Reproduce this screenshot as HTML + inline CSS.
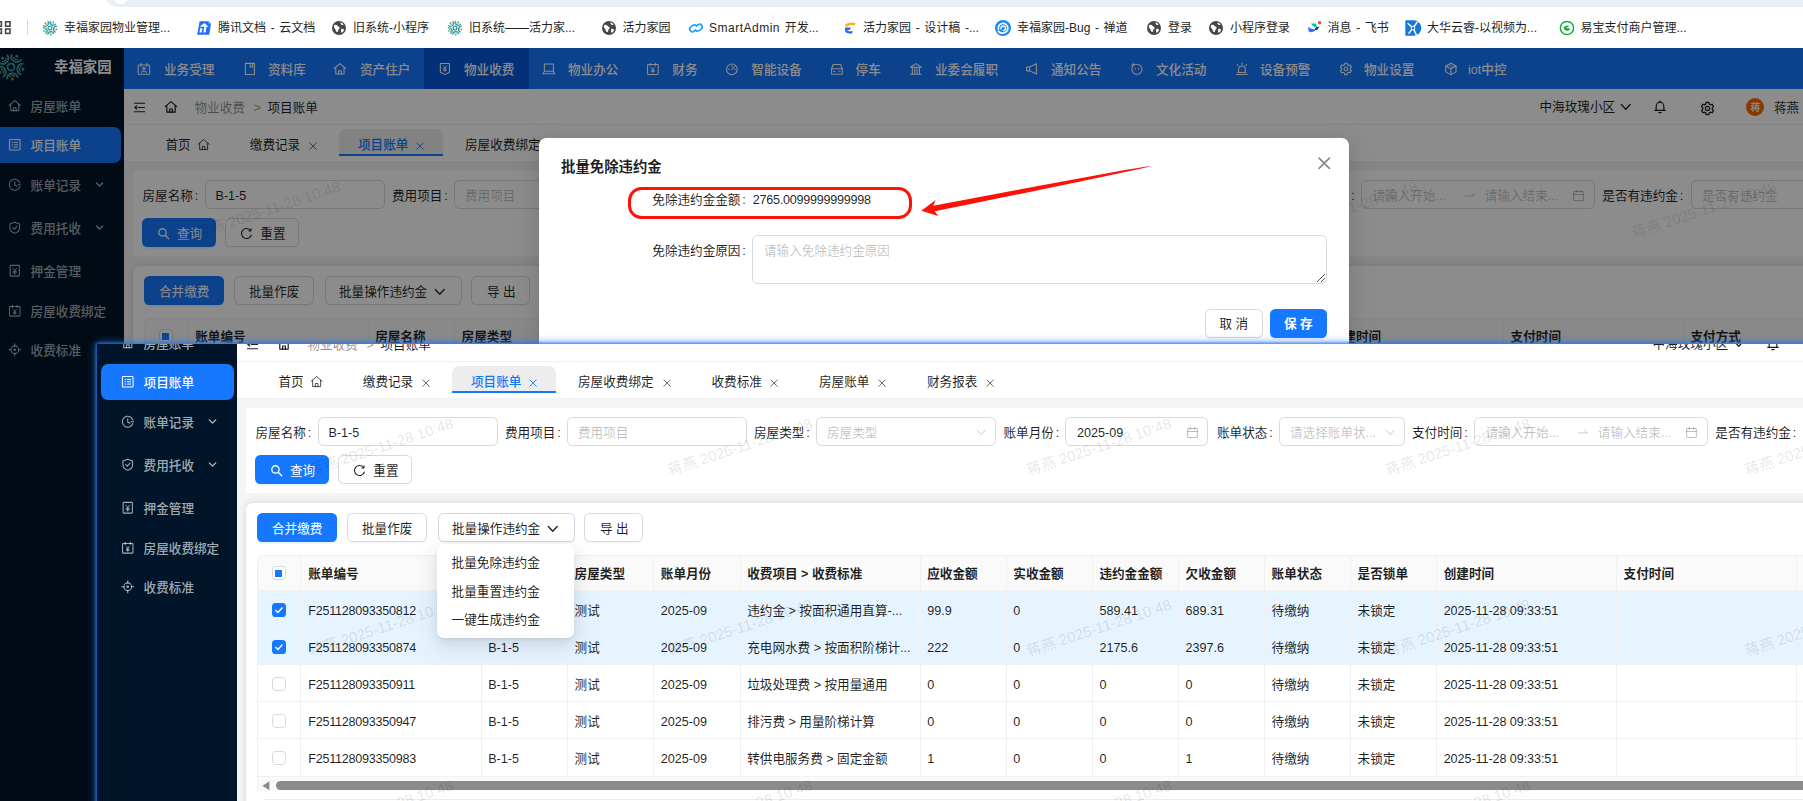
<!DOCTYPE html>
<html lang="zh-CN"><head><meta charset="utf-8"><title>项目账单</title>
<style>
*{box-sizing:border-box;margin:0;padding:0}
html,body{width:1803px;height:801px;overflow:hidden;background:#fff}
body{position:relative;font-family:"Liberation Sans","Noto Sans CJK SC",sans-serif;font-size:12.6px;color:rgba(0,0,0,.88)}
div,span.t,svg.i{position:absolute}
span.t{white-space:nowrap;line-height:20px;height:20px;margin-top:-10px;display:block}
svg.i{overflow:visible;display:block}
#s1{left:0;top:48px;width:1803px;height:753px;overflow:hidden}
#s2{left:97px;top:344px;width:1706px;height:457px;overflow:hidden;background:#fff}
#s2b{left:97px;top:344px;width:1720px;height:470px;box-shadow:0 0 9px 1.5px rgba(42,122,238,.75),0 0 3px 1px rgba(42,122,238,.9);pointer-events:none}
.pg{width:1933px;height:1100px}
#mask{left:0;top:0;width:1803px;height:753px;background:rgba(0,0,0,.45)}
.w{color:#fff}
.g{color:rgba(0,0,0,.45)}
.ph{color:rgba(0,0,0,.25)}
.b{font-weight:700}
.inp{border:1px solid #d9d9d9;border-radius:5.4px;background:#fff}
.btn{border:1px solid #d9d9d9;border-radius:5.4px;background:#fff;box-shadow:0 1.8px 0 rgba(0,0,0,.02)}
.btnp{border-radius:5.4px;background:#1677ff;box-shadow:0 1.8px 0 rgba(5,145,255,.1)}
.wm{color:rgba(0,0,0,.115);font-size:15px;text-align:center;transform:rotate(-18.4deg);white-space:nowrap;line-height:18px;pointer-events:none}
.n{letter-spacing:-0.25px}
.c{font-style:normal;margin-left:1.8px}
.n2{letter-spacing:-0.08px}

</style></head>
<body>
<div style="left:0.00px;top:0.00px;width:1803.00px;height:48.00px;background:#fff"></div>
<div style="left:105.00px;top:-20.00px;width:1800.00px;height:26.50px;background:#e9eef8;border-radius:13px"></div>
<div style="left:113.50px;top:-10.00px;width:14.00px;height:14.00px;background:#fff;border-radius:50%"></div>
<svg class="i" style="left:-1px;top:20.5px" width="12" height="13" viewBox="0 0 12 13" fill="none" stroke="#474747" stroke-width="1.6"><rect x="-2" y="0.8" width="4.4" height="4.4"/><rect x="6.6" y="0.8" width="4.4" height="4.4"/><rect x="-2" y="8" width="4.4" height="4.4"/><rect x="6.6" y="8" width="4.4" height="4.4"/></svg>
<div style="left:26.50px;top:19.00px;width:1.50px;height:16.00px;background:#c9d8f5;border-radius:1px"></div>
<svg class="i" style="left:42.00px;top:19.50px" width="16" height="16" viewBox="-14.5 -14.5 29 29"><g transform="rotate(28.6)"><circle cx="0" cy="-12.2" r="1.5" fill="#2f9fa6"/><path d="M-5.38 -10.86 A5.5 5.5 0 0 0 5.38 -10.86" stroke="#2f9fa6" stroke-width="2.3" fill="none" stroke-linecap="round"/><path d="M-2.53 -9.88 A3.3 3.3 0 0 0 2.53 -9.88" stroke="#d9982a" stroke-width="1.15" fill="none" stroke-linecap="round"/></g><g transform="rotate(100.6)"><circle cx="0" cy="-12.2" r="1.5" fill="#2f9fa6"/><path d="M-5.38 -10.86 A5.5 5.5 0 0 0 5.38 -10.86" stroke="#2f9fa6" stroke-width="2.3" fill="none" stroke-linecap="round"/><path d="M-2.53 -9.88 A3.3 3.3 0 0 0 2.53 -9.88" stroke="#d9982a" stroke-width="1.15" fill="none" stroke-linecap="round"/></g><g transform="rotate(172.6)"><circle cx="0" cy="-12.2" r="1.5" fill="#2f9fa6"/><path d="M-5.38 -10.86 A5.5 5.5 0 0 0 5.38 -10.86" stroke="#2f9fa6" stroke-width="2.3" fill="none" stroke-linecap="round"/><path d="M-2.53 -9.88 A3.3 3.3 0 0 0 2.53 -9.88" stroke="#d9982a" stroke-width="1.15" fill="none" stroke-linecap="round"/></g><g transform="rotate(244.6)"><circle cx="0" cy="-12.2" r="1.5" fill="#2f9fa6"/><path d="M-5.38 -10.86 A5.5 5.5 0 0 0 5.38 -10.86" stroke="#2f9fa6" stroke-width="2.3" fill="none" stroke-linecap="round"/><path d="M-2.53 -9.88 A3.3 3.3 0 0 0 2.53 -9.88" stroke="#d9982a" stroke-width="1.15" fill="none" stroke-linecap="round"/></g><g transform="rotate(316.6)"><circle cx="0" cy="-12.2" r="1.5" fill="#2f9fa6"/><path d="M-5.38 -10.86 A5.5 5.5 0 0 0 5.38 -10.86" stroke="#2f9fa6" stroke-width="2.3" fill="none" stroke-linecap="round"/><path d="M-2.53 -9.88 A3.3 3.3 0 0 0 2.53 -9.88" stroke="#d9982a" stroke-width="1.15" fill="none" stroke-linecap="round"/></g><circle r="3.5" fill="none" stroke="#2f9fa6" stroke-width="2.3"/></svg>
<span class="t" style="left:64.00px;top:27.60px;font-size:12px;color:#1f1f1f;word-spacing:1.3px">幸福家园物业管理...</span>
<svg class="i" style="left:196.00px;top:19.50px" width="16" height="16" viewBox="0 0 16 16"><path d="M3.6 1.2 H12.4 L15 3.8 L13.2 14.8 H1.2 Z" fill="#1e6fff"/><path d="M12.4 1.2 L15 3.8 H12.4 Z" fill="#19d3f3"/><path d="M3.6 6.8 L8.4 3 L12.6 6.8 H10.4 L9.6 12.6 H7.4 L8.2 6.8 Z" fill="#fff"/><path d="M4.2 8.2 H6.4 L5.6 12.6 H3.4 Z" fill="#fff"/></svg>
<span class="t" style="left:218.00px;top:27.60px;font-size:12px;color:#1f1f1f;word-spacing:1.3px">腾讯文档 - 云文档</span>
<svg class="i" style="left:331.00px;top:19.50px" width="16" height="16" viewBox="0 0 16 16"><circle cx="8" cy="8" r="7" fill="#474747"/><path d="M3.2 5.2 C4.6 4.4 5.8 4.8 6.4 5.8 C7 6.8 8.4 6.6 8.6 7.8 C8.8 9 7.4 9.2 7.2 10.4 C7 11.6 6 12.6 5.2 11.6 C4.4 10.6 4.8 9.4 3.8 8.6 C2.8 7.8 2.4 6.2 3.2 5.2 Z M9.6 2.6 C10.8 3 12 3.6 12.6 4.8 C11.8 5.4 10.8 5 10.2 4.4 C9.6 3.8 9.2 3.2 9.6 2.6 Z M10.4 9 C11.4 8.6 12.6 9 13 10 C12.6 11.4 11.6 12.4 10.6 12.8 C10 11.8 9.8 10 10.4 9 Z" fill="#fff"/></svg>
<span class="t" style="left:353.00px;top:27.60px;font-size:12px;color:#1f1f1f;word-spacing:1.3px">旧系统-小程序</span>
<svg class="i" style="left:447.00px;top:19.50px" width="16" height="16" viewBox="-14.5 -14.5 29 29"><g transform="rotate(28.6)"><circle cx="0" cy="-12.2" r="1.5" fill="#2f9fa6"/><path d="M-5.38 -10.86 A5.5 5.5 0 0 0 5.38 -10.86" stroke="#2f9fa6" stroke-width="2.3" fill="none" stroke-linecap="round"/><path d="M-2.53 -9.88 A3.3 3.3 0 0 0 2.53 -9.88" stroke="#d9982a" stroke-width="1.15" fill="none" stroke-linecap="round"/></g><g transform="rotate(100.6)"><circle cx="0" cy="-12.2" r="1.5" fill="#2f9fa6"/><path d="M-5.38 -10.86 A5.5 5.5 0 0 0 5.38 -10.86" stroke="#2f9fa6" stroke-width="2.3" fill="none" stroke-linecap="round"/><path d="M-2.53 -9.88 A3.3 3.3 0 0 0 2.53 -9.88" stroke="#d9982a" stroke-width="1.15" fill="none" stroke-linecap="round"/></g><g transform="rotate(172.6)"><circle cx="0" cy="-12.2" r="1.5" fill="#2f9fa6"/><path d="M-5.38 -10.86 A5.5 5.5 0 0 0 5.38 -10.86" stroke="#2f9fa6" stroke-width="2.3" fill="none" stroke-linecap="round"/><path d="M-2.53 -9.88 A3.3 3.3 0 0 0 2.53 -9.88" stroke="#d9982a" stroke-width="1.15" fill="none" stroke-linecap="round"/></g><g transform="rotate(244.6)"><circle cx="0" cy="-12.2" r="1.5" fill="#2f9fa6"/><path d="M-5.38 -10.86 A5.5 5.5 0 0 0 5.38 -10.86" stroke="#2f9fa6" stroke-width="2.3" fill="none" stroke-linecap="round"/><path d="M-2.53 -9.88 A3.3 3.3 0 0 0 2.53 -9.88" stroke="#d9982a" stroke-width="1.15" fill="none" stroke-linecap="round"/></g><g transform="rotate(316.6)"><circle cx="0" cy="-12.2" r="1.5" fill="#2f9fa6"/><path d="M-5.38 -10.86 A5.5 5.5 0 0 0 5.38 -10.86" stroke="#2f9fa6" stroke-width="2.3" fill="none" stroke-linecap="round"/><path d="M-2.53 -9.88 A3.3 3.3 0 0 0 2.53 -9.88" stroke="#d9982a" stroke-width="1.15" fill="none" stroke-linecap="round"/></g><circle r="3.5" fill="none" stroke="#2f9fa6" stroke-width="2.3"/></svg>
<span class="t" style="left:469.00px;top:27.60px;font-size:12px;color:#1f1f1f;word-spacing:1.3px">旧系统——活力家...</span>
<svg class="i" style="left:601.00px;top:19.50px" width="16" height="16" viewBox="0 0 16 16"><circle cx="8" cy="8" r="7" fill="#474747"/><path d="M3.2 5.2 C4.6 4.4 5.8 4.8 6.4 5.8 C7 6.8 8.4 6.6 8.6 7.8 C8.8 9 7.4 9.2 7.2 10.4 C7 11.6 6 12.6 5.2 11.6 C4.4 10.6 4.8 9.4 3.8 8.6 C2.8 7.8 2.4 6.2 3.2 5.2 Z M9.6 2.6 C10.8 3 12 3.6 12.6 4.8 C11.8 5.4 10.8 5 10.2 4.4 C9.6 3.8 9.2 3.2 9.6 2.6 Z M10.4 9 C11.4 8.6 12.6 9 13 10 C12.6 11.4 11.6 12.4 10.6 12.8 C10 11.8 9.8 10 10.4 9 Z" fill="#fff"/></svg>
<span class="t" style="left:622.50px;top:27.60px;font-size:12px;color:#1f1f1f;word-spacing:1.3px">活力家园</span>
<svg class="i" style="left:688.00px;top:19.50px" width="16" height="16" viewBox="0 0 16 16"><g fill="none" stroke="#1aa0ff" stroke-width="1.7" stroke-linecap="round"><path d="M6.8 10.6 L5.6 11.4 A2.6 2.6 0 0 1 2.4 7.4 L5 5.4 A2.6 2.6 0 0 1 8.6 6"/><path d="M9.2 5.4 L10.4 4.6 A2.6 2.6 0 0 1 13.6 8.6 L11 10.6 A2.6 2.6 0 0 1 7.4 10"/></g></svg>
<span class="t" style="left:709.00px;top:27.60px;font-size:12px;color:#1f1f1f;word-spacing:1.3px"><span style="letter-spacing:.5px">SmartAdmin</span> 开发...</span>
<svg class="i" style="left:842.00px;top:19.50px" width="16" height="16" viewBox="0 0 16 16"><path d="M3 6.2 C3 3.6 6 2.2 13.6 3 L12.4 5.4 C8 5 6.4 5.4 6.4 6.6 Z" fill="#ffb11a"/><path d="M3 7.6 L9 7.6 L7.6 10 L5.4 10 C5.4 11.2 7 11.6 11 11.2 L9.8 13.6 C5 14 3 12.4 3 10 Z" fill="#1e6fff"/></svg>
<span class="t" style="left:863.00px;top:27.60px;font-size:12px;color:#1f1f1f;word-spacing:1.3px">活力家园 - 设计稿 -...</span>
<svg class="i" style="left:995.00px;top:19.50px" width="16" height="16" viewBox="0 0 16 16"><circle cx="8" cy="8" r="8" fill="#1a8cf0"/><path d="M3.4 9.4 A4.8 4.8 0 1 1 8.4 13 C6 13.4 4.2 12.4 3.4 11.4" fill="none" stroke="#fff" stroke-width="1.7" stroke-linecap="round"/><path d="M6 8.8 A2.3 2.3 0 1 1 8.4 10.6" fill="none" stroke="#fff" stroke-width="1.4" stroke-linecap="round"/></svg>
<span class="t" style="left:1017.00px;top:27.60px;font-size:12px;color:#1f1f1f;word-spacing:1.3px">幸福家园-Bug - 禅道</span>
<svg class="i" style="left:1146.00px;top:19.50px" width="16" height="16" viewBox="0 0 16 16"><circle cx="8" cy="8" r="7" fill="#474747"/><path d="M3.2 5.2 C4.6 4.4 5.8 4.8 6.4 5.8 C7 6.8 8.4 6.6 8.6 7.8 C8.8 9 7.4 9.2 7.2 10.4 C7 11.6 6 12.6 5.2 11.6 C4.4 10.6 4.8 9.4 3.8 8.6 C2.8 7.8 2.4 6.2 3.2 5.2 Z M9.6 2.6 C10.8 3 12 3.6 12.6 4.8 C11.8 5.4 10.8 5 10.2 4.4 C9.6 3.8 9.2 3.2 9.6 2.6 Z M10.4 9 C11.4 8.6 12.6 9 13 10 C12.6 11.4 11.6 12.4 10.6 12.8 C10 11.8 9.8 10 10.4 9 Z" fill="#fff"/></svg>
<span class="t" style="left:1168.00px;top:27.60px;font-size:12px;color:#1f1f1f;word-spacing:1.3px">登录</span>
<svg class="i" style="left:1208.00px;top:19.50px" width="16" height="16" viewBox="0 0 16 16"><circle cx="8" cy="8" r="7" fill="#474747"/><path d="M3.2 5.2 C4.6 4.4 5.8 4.8 6.4 5.8 C7 6.8 8.4 6.6 8.6 7.8 C8.8 9 7.4 9.2 7.2 10.4 C7 11.6 6 12.6 5.2 11.6 C4.4 10.6 4.8 9.4 3.8 8.6 C2.8 7.8 2.4 6.2 3.2 5.2 Z M9.6 2.6 C10.8 3 12 3.6 12.6 4.8 C11.8 5.4 10.8 5 10.2 4.4 C9.6 3.8 9.2 3.2 9.6 2.6 Z M10.4 9 C11.4 8.6 12.6 9 13 10 C12.6 11.4 11.6 12.4 10.6 12.8 C10 11.8 9.8 10 10.4 9 Z" fill="#fff"/></svg>
<span class="t" style="left:1230.00px;top:27.60px;font-size:12px;color:#1f1f1f;word-spacing:1.3px">小程序登录</span>
<svg class="i" style="left:1306.00px;top:19.50px" width="16" height="16" viewBox="0 0 16 16"><path d="M2.2 6.4 C4.8 9 7.4 9.8 10.4 8.6 C9.4 11.4 6.4 13.2 2.6 11.6 Z" fill="#3370ff"/><path d="M5 3.4 H9.6 C10.6 4.6 11 6 10.8 7.6 C8.6 7.4 6.4 5.8 5 3.4 Z" fill="#00c4b8"/><path d="M8.6 9 C9.4 7.2 11.2 6.2 13.6 6.8 C12.6 7.8 12.2 9.4 10.4 10.4 Z" fill="#133c9a"/><circle cx="13.6" cy="2.8" r="1.7" fill="#f5483b"/></svg>
<span class="t" style="left:1327.50px;top:27.60px;font-size:12px;color:#1f1f1f;word-spacing:1.3px">消息 - 飞书</span>
<svg class="i" style="left:1405.00px;top:19.50px" width="16" height="16" viewBox="0 0 16 16"><path d="M0.3 0.3 H8.6 A7.7 7.7 0 0 1 8.6 15.7 H0.3 Z" fill="#1678d8"/><g stroke="#fff" stroke-width="1.5" fill="none"><path d="M2.6 3.2 L8 8 L12.6 1.6"/><path d="M3.6 13.6 L8 8 L11.6 15.4"/></g><circle cx="8" cy="8" r="2.3" fill="#fff"/><circle cx="8" cy="8" r="1.3" fill="#1678d8"/></svg>
<span class="t" style="left:1427.00px;top:27.60px;font-size:12px;color:#1f1f1f;word-spacing:1.3px">大华云睿-以视频为...</span>
<svg class="i" style="left:1559.00px;top:19.50px" width="16" height="16" viewBox="0 0 16 16"><circle cx="8" cy="8" r="6.6" fill="none" stroke="#1dab45" stroke-width="1.5"/><path d="M4.6 8 C5.4 5.8 8.6 4.8 10.8 6.4 C9 6.4 7.6 7 7.2 8.4 C8.6 7.6 10.4 8 11 9.2 C9.4 11.6 5.4 11.2 4.6 8 Z" fill="#1dab45"/></svg>
<span class="t" style="left:1580.50px;top:27.60px;font-size:12px;color:#1f1f1f;word-spacing:1.3px">易宝支付商户管理...</span>
<div id="s1"><div class="pg" style="left:-113px;top:-285px"><div style="left:237.00px;top:285.00px;width:1700.00px;height:900.00px;background:#f5f5f5"></div>
<div style="left:237.00px;top:285.00px;width:1700.00px;height:40.50px;background:#1677ff"></div>
<div style="left:537.00px;top:285.00px;width:105.00px;height:40.50px;background:#0958d9"></div>
<svg class="i" style="left:250.40px;top:298.80px;color:#fff" width="13.8" height="13.8" viewBox="0 0 14 14" fill="none" stroke="currentColor" stroke-width="1.1" stroke-linecap="round" stroke-linejoin="round"><rect x="1.2" y="3" width="11.6" height="9.4" rx="0.6"/><path d="M4 1.6 V4.2 M10 1.6 V4.2"/><circle cx="7" cy="6.6" r="1.3"/><path d="M4.6 10.6 C5 8.6 9 8.6 9.4 10.6"/></svg>
<span class="t" style="left:277.00px;top:306.60px;color:#fff;font-weight:500">业务受理</span>
<svg class="i" style="left:356.40px;top:298.80px;color:#fff" width="13.8" height="13.8" viewBox="0 0 14 14" fill="none" stroke="currentColor" stroke-width="1.1" stroke-linecap="round" stroke-linejoin="round"><path d="M2.4 1.4 H11.6 V12.6 H2.4 Z"/><path d="M7.4 1.4 V5 H9.8 V1.4"/></svg>
<span class="t" style="left:381.00px;top:306.60px;color:#fff;font-weight:500">资料库</span>
<svg class="i" style="left:446.40px;top:298.80px;color:#fff" width="13.8" height="13.8" viewBox="0 0 14 14" fill="none" stroke="currentColor" stroke-width="1.1" stroke-linecap="round" stroke-linejoin="round"><path d="M1.2 6.6 L7 1.6 L12.8 6.6"/><path d="M2.8 5.6 V12.2 H11.2 V5.6"/><path d="M5.6 12.2 V9 H8.4 V12.2"/></svg>
<span class="t" style="left:473.00px;top:306.60px;color:#fff;font-weight:500">资产住户</span>
<svg class="i" style="left:551.40px;top:298.80px;color:#fff" width="13.8" height="13.8" viewBox="0 0 14 14" fill="none" stroke="currentColor" stroke-width="1.1" stroke-linecap="round" stroke-linejoin="round"><path d="M2.4 1.6 H11.6 V10.4 L7 12.8 L2.4 10.4 Z"/><path d="M5.2 3.8 L7 6.2 L8.8 3.8 M7 6.2 V9.6 M5.4 7 H8.6 M5.4 8.4 H8.6" stroke-width="0.9"/></svg>
<span class="t" style="left:577.00px;top:306.60px;color:#fff;font-weight:500">物业收费</span>
<svg class="i" style="left:655.40px;top:298.80px;color:#fff" width="13.8" height="13.8" viewBox="0 0 14 14" fill="none" stroke="currentColor" stroke-width="1.1" stroke-linecap="round" stroke-linejoin="round"><rect x="2.4" y="2" width="9.2" height="7.4" rx="0.5"/><path d="M1 12 H13 M2.4 9.4 L1 12 M11.6 9.4 L13 12"/></svg>
<span class="t" style="left:681.00px;top:306.60px;color:#fff;font-weight:500">物业办公</span>
<svg class="i" style="left:759.40px;top:298.80px;color:#fff" width="13.8" height="13.8" viewBox="0 0 14 14" fill="none" stroke="currentColor" stroke-width="1.1" stroke-linecap="round" stroke-linejoin="round"><rect x="1.6" y="2.6" width="10.8" height="10" rx="0.6"/><path d="M4.4 1.2 V3.6 M9.6 1.2 V3.6"/><path d="M5.4 5.6 L7 7.6 L8.6 5.6 M7 7.6 V10.8 M5.6 8.4 H8.4 M5.6 9.6 H8.4" stroke-width="0.9"/></svg>
<span class="t" style="left:785.30px;top:306.60px;color:#fff;font-weight:500">财务</span>
<svg class="i" style="left:838.40px;top:298.80px;color:#fff" width="13.8" height="13.8" viewBox="0 0 14 14" fill="none" stroke="currentColor" stroke-width="1.1" stroke-linecap="round" stroke-linejoin="round"><circle cx="7" cy="7.4" r="5.4"/><path d="M7 7.6 L9.4 4.8 M3.6 7.4 H4.4 M9.6 7.4 H10.4 M7 4 V4.8"/></svg>
<span class="t" style="left:864.30px;top:306.60px;color:#fff;font-weight:500">智能设备</span>
<svg class="i" style="left:943.40px;top:298.80px;color:#fff" width="13.8" height="13.8" viewBox="0 0 14 14" fill="none" stroke="currentColor" stroke-width="1.1" stroke-linecap="round" stroke-linejoin="round"><path d="M1.6 12.4 V6.8 L3.2 2.6 H10.8 L12.4 6.8 V12.4 Z"/><path d="M1.6 6.8 H12.4 M3.8 9.4 H5 M9 9.4 H10.2"/></svg>
<span class="t" style="left:968.60px;top:306.60px;color:#fff;font-weight:500">停车</span>
<svg class="i" style="left:1022.40px;top:298.80px;color:#fff" width="13.8" height="13.8" viewBox="0 0 14 14" fill="none" stroke="currentColor" stroke-width="1.1" stroke-linecap="round" stroke-linejoin="round"><path d="M1.4 5.4 L7 1.6 L12.6 5.4 Z"/><path d="M1.6 12.4 H12.4 M3.4 5.6 V12 M5.8 5.6 V12 M8.2 5.6 V12 M10.6 5.6 V12"/></svg>
<span class="t" style="left:1048.00px;top:306.60px;color:#fff;font-weight:500">业委会履职</span>
<svg class="i" style="left:1138.40px;top:298.80px;color:#fff" width="13.8" height="13.8" viewBox="0 0 14 14" fill="none" stroke="currentColor" stroke-width="1.1" stroke-linecap="round" stroke-linejoin="round"><path d="M1.6 5 H4.6 L11.6 1.8 V12.2 L4.6 9 H1.6 Z"/><path d="M4.6 5 V9"/></svg>
<span class="t" style="left:1164.00px;top:306.60px;color:#fff;font-weight:500">通知公告</span>
<svg class="i" style="left:1243.40px;top:298.80px;color:#fff" width="13.8" height="13.8" viewBox="0 0 14 14" fill="none" stroke="currentColor" stroke-width="1.1" stroke-linecap="round" stroke-linejoin="round"><circle cx="7" cy="7.4" r="5.2"/><path d="M1.8 3.4 C2.6 2 3.8 1.8 4.6 2.6"/><path d="M5.4 6.4 V7 M8.8 6.4 V7"/></svg>
<span class="t" style="left:1269.00px;top:306.60px;color:#fff;font-weight:500">文化活动</span>
<svg class="i" style="left:1348.40px;top:298.80px;color:#fff" width="13.8" height="13.8" viewBox="0 0 14 14" fill="none" stroke="currentColor" stroke-width="1.1" stroke-linecap="round" stroke-linejoin="round"><path d="M3.6 10.6 V7.4 A3.4 3.4 0 0 1 10.4 7.4 V10.6"/><path d="M1.6 12.6 H12.4 M2.8 10.6 H11.2 M7 1 V2.2 M2.2 2.6 L3 3.6 M11.8 2.6 L11 3.6"/></svg>
<span class="t" style="left:1373.00px;top:306.60px;color:#fff;font-weight:500">设备预警</span>
<svg class="i" style="left:1451.80px;top:298.80px;color:#fff" width="13.8" height="13.8" viewBox="0 0 14 14" fill="none" stroke="currentColor" stroke-width="1.1" stroke-linecap="round" stroke-linejoin="round"><circle cx="7" cy="7" r="1.9"/><path d="M5.52 2.70 L5.77 1.23 L8.23 1.23 L8.48 2.70 L9.99 3.57 L11.38 3.05 L12.61 5.18 L11.47 6.13 L11.47 7.87 L12.61 8.82 L11.38 10.95 L9.99 10.43 L8.48 11.30 L8.23 12.77 L5.77 12.77 L5.52 11.30 L4.01 10.43 L2.62 10.95 L1.39 8.82 L2.53 7.87 L2.53 6.13 L1.39 5.18 L2.62 3.05 L4.01 3.57 Z"/></svg>
<span class="t" style="left:1477.00px;top:306.60px;color:#fff;font-weight:500">物业设置</span>
<svg class="i" style="left:1556.60px;top:298.80px;color:#fff" width="13.8" height="13.8" viewBox="0 0 14 14" fill="none" stroke="currentColor" stroke-width="1.1" stroke-linecap="round" stroke-linejoin="round"><path d="M7 1.2 L12.2 4 V10 L7 12.8 L1.8 10 V4 Z"/><path d="M1.8 4 L7 6.8 L12.2 4 M7 6.8 V12.8"/><path d="M4.4 2.6 L9.6 5.4" stroke-width="0.8"/></svg>
<span class="t" style="left:1581.00px;top:306.60px;color:#fff;font-weight:500">iot中控</span>
<div style="left:237.00px;top:325.50px;width:1700.00px;height:36.00px;background:#fff;border-bottom:1px solid #f0f0f0"></div>
<svg class="i" style="left:246.00px;top:338.00px;color:rgba(0,0,0,.88)" width="13" height="13" viewBox="0 0 14 14" fill="none" stroke="currentColor" stroke-width="1.1" stroke-linecap="round" stroke-linejoin="round"><path d="M1.4 2.4 H12.6 M5.8 7 H12.6 M1.4 11.6 H12.6"/><path d="M3.8 5 L1.4 7 L3.8 9 Z" fill="currentColor" stroke-width="0.6"/></svg>
<svg class="i" style="left:276.50px;top:337.00px;color:rgba(0,0,0,.88)" width="14" height="14" viewBox="0 0 14 14" fill="none" stroke="currentColor" stroke-width="1.2" stroke-linecap="round" stroke-linejoin="round"><path d="M1.2 6.6 L7 1.6 L12.8 6.6"/><path d="M2.8 5.6 V12.2 H11.2 V5.6"/><path d="M5.6 12.2 V9 H8.4 V12.2"/></svg>
<span class="t g" style="left:307.50px;top:344.50px;">物业收费</span>
<span class="t g" style="left:366.50px;top:344.50px;">&gt;</span>
<span class="t" style="left:380.50px;top:344.50px;">项目账单</span>
<span class="t" style="left:1652.50px;top:344.00px;">中海玫瑰小区</span>
<svg class="i" style="left:1732.50px;top:338.40px;color:rgba(0,0,0,.88)" width="11.5" height="11.5" viewBox="0 0 14 14" fill="none" stroke="currentColor" stroke-width="1.6" stroke-linecap="round" stroke-linejoin="round"><path d="M1.6 4.2 L7 10 L12.4 4.2"/></svg>
<svg class="i" style="left:1765.50px;top:336.50px;color:rgba(0,0,0,.88)" width="14" height="14" viewBox="0 0 14 14" fill="none" stroke="currentColor" stroke-width="1.2" stroke-linecap="round" stroke-linejoin="round"><path d="M3.2 10.4 V6 A3.8 3.8 0 0 1 10.8 6 V10.4"/><path d="M1.8 10.4 H12.2 M5.8 12.6 H8.2 M7 1 V2"/></svg>
<svg class="i" style="left:1813.00px;top:337.50px;color:rgba(0,0,0,.88)" width="15" height="15" viewBox="0 0 14 14" fill="none" stroke="currentColor" stroke-width="1.2" stroke-linecap="round" stroke-linejoin="round"><circle cx="7" cy="7" r="1.9"/><path d="M5.52 2.70 L5.77 1.23 L8.23 1.23 L8.48 2.70 L9.99 3.57 L11.38 3.05 L12.61 5.18 L11.47 6.13 L11.47 7.87 L12.61 8.82 L11.38 10.95 L9.99 10.43 L8.48 11.30 L8.23 12.77 L5.77 12.77 L5.52 11.30 L4.01 10.43 L2.62 10.95 L1.39 8.82 L2.53 7.87 L2.53 6.13 L1.39 5.18 L2.62 3.05 L4.01 3.57 Z"/></svg>
<div style="left:1859.40px;top:335.10px;width:18.00px;height:18.00px;background:#f56a00;border-radius:50%;color:#fff;font-size:10.5px;font-weight:500;line-height:18px;text-align:center">蒋</div>
<span class="t" style="left:1887.00px;top:344.50px;">蒋燕</span>
<div style="left:237.00px;top:361.50px;width:1700.00px;height:37.00px;background:#fff;border-bottom:1px solid #f0f0f0"></div>
<div style="left:452.00px;top:366.30px;width:104.00px;height:27.00px;background:#ededed;border-radius:7px 7px 0 0;border-bottom:2px solid #1677ff"></div>
<span class="t" style="left:278.50px;top:381.80px;">首页</span>
<svg class="i" style="left:310.00px;top:374.90px;color:rgba(0,0,0,.7)" width="13.3" height="13.3" viewBox="0 0 14 14" fill="none" stroke="currentColor" stroke-width="1.05" stroke-linecap="round" stroke-linejoin="round"><path d="M1.2 6.6 L7 1.6 L12.8 6.6"/><path d="M2.8 5.6 V12.2 H11.2 V5.6"/><path d="M5.6 12.2 V9 H8.4 V12.2"/></svg>
<span class="t" style="left:362.80px;top:381.80px;color:rgba(0,0,0,.88)">缴费记录</span>
<svg class="i" style="left:420.90px;top:377.80px;color:rgba(0,0,0,.65)" width="10.2" height="10.2" viewBox="0 0 14 14" fill="none" stroke="currentColor" stroke-width="1.25" stroke-linecap="round" stroke-linejoin="round"><path d="M2.6 2.6 L11.4 11.4 M11.4 2.6 L2.6 11.4"/></svg>
<span class="t" style="left:471.00px;top:381.80px;color:#1677ff;font-weight:500">项目账单</span>
<svg class="i" style="left:528.40px;top:377.80px;color:#1677ff" width="10.2" height="10.2" viewBox="0 0 14 14" fill="none" stroke="currentColor" stroke-width="1.25" stroke-linecap="round" stroke-linejoin="round"><path d="M2.6 2.6 L11.4 11.4 M11.4 2.6 L2.6 11.4"/></svg>
<span class="t" style="left:578.00px;top:381.80px;color:rgba(0,0,0,.88)">房屋收费绑定</span>
<svg class="i" style="left:661.70px;top:377.80px;color:rgba(0,0,0,.65)" width="10.2" height="10.2" viewBox="0 0 14 14" fill="none" stroke="currentColor" stroke-width="1.25" stroke-linecap="round" stroke-linejoin="round"><path d="M2.6 2.6 L11.4 11.4 M11.4 2.6 L2.6 11.4"/></svg>
<span class="t" style="left:711.50px;top:381.80px;color:rgba(0,0,0,.88)">收费标准</span>
<svg class="i" style="left:768.70px;top:377.80px;color:rgba(0,0,0,.65)" width="10.2" height="10.2" viewBox="0 0 14 14" fill="none" stroke="currentColor" stroke-width="1.25" stroke-linecap="round" stroke-linejoin="round"><path d="M2.6 2.6 L11.4 11.4 M11.4 2.6 L2.6 11.4"/></svg>
<span class="t" style="left:819.00px;top:381.80px;color:rgba(0,0,0,.88)">房屋账单</span>
<svg class="i" style="left:876.90px;top:377.80px;color:rgba(0,0,0,.65)" width="10.2" height="10.2" viewBox="0 0 14 14" fill="none" stroke="currentColor" stroke-width="1.25" stroke-linecap="round" stroke-linejoin="round"><path d="M2.6 2.6 L11.4 11.4 M11.4 2.6 L2.6 11.4"/></svg>
<span class="t" style="left:927.00px;top:381.80px;color:rgba(0,0,0,.88)">财务报表</span>
<svg class="i" style="left:984.90px;top:377.80px;color:rgba(0,0,0,.65)" width="10.2" height="10.2" viewBox="0 0 14 14" fill="none" stroke="currentColor" stroke-width="1.25" stroke-linecap="round" stroke-linejoin="round"><path d="M2.6 2.6 L11.4 11.4 M11.4 2.6 L2.6 11.4"/></svg>
<div style="left:246.25px;top:408.00px;width:1700.00px;height:85.00px;background:#fff"></div>
<span class="t" style="left:255.50px;top:432.50px;">房屋名称<i class="c">:</i></span>
<div class="inp" style="left:318.25px;top:417.00px;width:180.00px;height:28.80px;"></div>
<span class="t" style="left:328.50px;top:432.50px;">B-1-5</span>
<span class="t" style="left:505.00px;top:432.50px;">费用项目<i class="c">:</i></span>
<div class="inp" style="left:567.25px;top:417.00px;width:180.00px;height:28.80px;"></div>
<span class="t ph" style="left:578.00px;top:432.50px;">费用项目</span>
<span class="t" style="left:754.00px;top:432.50px;">房屋类型<i class="c">:</i></span>
<div class="inp" style="left:816.40px;top:417.00px;width:180.00px;height:28.80px;"></div>
<span class="t ph" style="left:827.00px;top:432.50px;">房屋类型</span>
<svg class="i" style="left:976.00px;top:426.50px;color:rgba(0,0,0,.25)" width="10.5" height="10.5" viewBox="0 0 14 14" fill="none" stroke="currentColor" stroke-width="1.2" stroke-linecap="round" stroke-linejoin="round"><path d="M1.6 4.2 L7 10 L12.4 4.2"/></svg>
<span class="t" style="left:1003.50px;top:432.50px;">账单月份<i class="c">:</i></span>
<div class="inp" style="left:1065.40px;top:417.00px;width:142.60px;height:28.80px;"></div>
<span class="t" style="left:1077.00px;top:432.50px;">2025-09</span>
<svg class="i" style="left:1185.50px;top:425.50px;color:rgba(0,0,0,.25)" width="13" height="13" viewBox="0 0 14 14" fill="none" stroke="currentColor" stroke-width="1.1" stroke-linecap="round" stroke-linejoin="round"><rect x="1.8" y="2.8" width="10.4" height="9.6" rx="0.6"/><path d="M1.8 5.8 H12.2 M4.6 1.4 V3.6 M9.4 1.4 V3.6"/></svg>
<span class="t" style="left:1217.00px;top:432.50px;">账单状态<i class="c">:</i></span>
<div class="inp" style="left:1279.00px;top:417.00px;width:126.00px;height:28.80px;"></div>
<span class="t ph" style="left:1290.00px;top:432.50px;">请选择账单状...</span>
<svg class="i" style="left:1384.60px;top:426.50px;color:rgba(0,0,0,.25)" width="10.5" height="10.5" viewBox="0 0 14 14" fill="none" stroke="currentColor" stroke-width="1.2" stroke-linecap="round" stroke-linejoin="round"><path d="M1.6 4.2 L7 10 L12.4 4.2"/></svg>
<span class="t" style="left:1412.00px;top:432.50px;">支付时间<i class="c">:</i></span>
<div class="inp" style="left:1474.40px;top:417.00px;width:233.40px;height:28.80px;"></div>
<span class="t ph" style="left:1485.50px;top:432.50px;">请输入开始...</span>
<svg class="i" style="left:1576.50px;top:426.00px;color:rgba(0,0,0,.25)" width="11.5" height="11.5" viewBox="0 0 14 14" fill="none" stroke="currentColor" stroke-width="1.0" stroke-linecap="round" stroke-linejoin="round"><path d="M1.4 8.4 H12.6 L9.4 5.2"/></svg>
<span class="t ph" style="left:1597.80px;top:432.50px;">请输入结束...</span>
<svg class="i" style="left:1684.80px;top:425.50px;color:rgba(0,0,0,.25)" width="13" height="13" viewBox="0 0 14 14" fill="none" stroke="currentColor" stroke-width="1.1" stroke-linecap="round" stroke-linejoin="round"><rect x="1.8" y="2.8" width="10.4" height="9.6" rx="0.6"/><path d="M1.8 5.8 H12.2 M4.6 1.4 V3.6 M9.4 1.4 V3.6"/></svg>
<span class="t" style="left:1715.30px;top:432.50px;">是否有违约金<i class="c">:</i></span>
<div class="inp" style="left:1804.00px;top:417.00px;width:180.00px;height:28.80px;"></div>
<span class="t ph" style="left:1815.00px;top:432.50px;">是否有违约金</span>
<div class="btnp" style="left:255.00px;top:455.30px;width:74.30px;height:28.80px;"></div>
<svg class="i" style="left:269.80px;top:463.60px;color:#fff" width="13.2" height="13.2" viewBox="0 0 14 14" fill="none" stroke="currentColor" stroke-width="1.45" stroke-linecap="round" stroke-linejoin="round"><circle cx="5.8" cy="5.8" r="3.9"/><path d="M8.7 8.7 L12.4 12.4"/></svg>
<span class="t w" style="left:290.00px;top:471.00px;">查询</span>
<div class="btn" style="left:338.30px;top:455.30px;width:74.00px;height:28.80px;"></div>
<svg class="i" style="left:352.60px;top:464.00px;color:rgba(0,0,0,.88)" width="13" height="13" viewBox="0 0 14 14" fill="none" stroke="currentColor" stroke-width="1.15" stroke-linecap="round" stroke-linejoin="round"><path d="M11.5 4.0 A5.4 5.4 0 1 0 12.2 8.6"/><path d="M11.9 1.9 L11.8 4.3 L9.5 4.2" stroke-width="1"/></svg>
<span class="t" style="left:373.30px;top:471.20px;">重置</span>
<div style="left:246.25px;top:503.00px;width:1700.00px;height:400.00px;background:#fff;border-radius:7px;box-shadow:0 0 9px rgba(0,0,0,.13)"></div>
<div class="btnp" style="left:257.00px;top:513.00px;width:80.30px;height:28.80px;"></div>
<span class="t w" style="left:272.00px;top:528.70px;">合并缴费</span>
<div class="btn" style="left:346.80px;top:513.00px;width:80.50px;height:28.80px;"></div>
<span class="t" style="left:362.00px;top:528.70px;">批量作废</span>
<div class="btn" style="left:438.00px;top:513.00px;width:136.80px;height:28.80px;"></div>
<span class="t" style="left:452.00px;top:528.70px;">批量操作违约金</span>
<svg class="i" style="left:547.30px;top:522.80px;color:rgba(0,0,0,.88)" width="11.5" height="11.5" viewBox="0 0 14 14" fill="none" stroke="currentColor" stroke-width="1.6" stroke-linecap="round" stroke-linejoin="round"><path d="M1.6 4.2 L7 10 L12.4 4.2"/></svg>
<div class="btn" style="left:584.40px;top:513.00px;width:58.40px;height:28.80px;"></div>
<span class="t" style="left:600.00px;top:528.70px;">导 出</span>
<div style="left:257.30px;top:555.00px;width:1700.00px;height:36.00px;background:#fafafa;border-top:1px solid #f0f0f0;border-left:1px solid #f0f0f0;border-radius:7px 0 0 0"></div>
<div style="left:257.30px;top:591.00px;width:1700.00px;height:37.12px;background:#e6f4ff;border-bottom:1px solid #f0f0f0;border-left:1px solid #f0f0f0"></div>
<div style="left:257.30px;top:628.12px;width:1700.00px;height:37.12px;background:#e6f4ff;border-bottom:1px solid #f0f0f0;border-left:1px solid #f0f0f0"></div>
<div style="left:257.30px;top:665.24px;width:1700.00px;height:37.12px;background:#fff;border-bottom:1px solid #f0f0f0;border-left:1px solid #f0f0f0"></div>
<div style="left:257.30px;top:702.36px;width:1700.00px;height:37.12px;background:#fff;border-bottom:1px solid #f0f0f0;border-left:1px solid #f0f0f0"></div>
<div style="left:257.30px;top:739.48px;width:1700.00px;height:37.12px;background:#fff;border-bottom:1px solid #f0f0f0;border-left:1px solid #f0f0f0"></div>
<div style="left:299.90px;top:555.00px;width:1.00px;height:221.60px;background:#f0f0f0"></div>
<div style="left:480.50px;top:555.00px;width:1.00px;height:221.60px;background:#f0f0f0"></div>
<div style="left:566.90px;top:555.00px;width:1.00px;height:221.60px;background:#f0f0f0"></div>
<div style="left:653.10px;top:555.00px;width:1.00px;height:221.60px;background:#f0f0f0"></div>
<div style="left:739.50px;top:555.00px;width:1.00px;height:221.60px;background:#f0f0f0"></div>
<div style="left:919.50px;top:555.00px;width:1.00px;height:221.60px;background:#f0f0f0"></div>
<div style="left:1005.60px;top:555.00px;width:1.00px;height:221.60px;background:#f0f0f0"></div>
<div style="left:1091.70px;top:555.00px;width:1.00px;height:221.60px;background:#f0f0f0"></div>
<div style="left:1177.90px;top:555.00px;width:1.00px;height:221.60px;background:#f0f0f0"></div>
<div style="left:1263.90px;top:555.00px;width:1.00px;height:221.60px;background:#f0f0f0"></div>
<div style="left:1349.90px;top:555.00px;width:1.00px;height:221.60px;background:#f0f0f0"></div>
<div style="left:1436.00px;top:555.00px;width:1.00px;height:221.60px;background:#f0f0f0"></div>
<div style="left:1615.90px;top:555.00px;width:1.00px;height:221.60px;background:#f0f0f0"></div>
<div style="left:1795.80px;top:555.00px;width:1.00px;height:221.60px;background:#f0f0f0"></div>
<div style="left:257.30px;top:590.00px;width:1700.00px;height:1.00px;background:#f0f0f0"></div>
<span class="t b" style="left:308.20px;top:574.10px;">账单编号</span>
<span class="t b" style="left:488.20px;top:574.10px;">房屋名称</span>
<span class="t b" style="left:574.60px;top:574.10px;">房屋类型</span>
<span class="t b" style="left:660.80px;top:574.10px;">账单月份</span>
<span class="t b" style="left:747.20px;top:574.10px;">收费项目 &gt; 收费标准</span>
<span class="t b" style="left:927.20px;top:574.10px;">应收金额</span>
<span class="t b" style="left:1013.30px;top:574.10px;">实收金额</span>
<span class="t b" style="left:1099.40px;top:574.10px;">违约金金额</span>
<span class="t b" style="left:1185.60px;top:574.10px;">欠收金额</span>
<span class="t b" style="left:1271.60px;top:574.10px;">账单状态</span>
<span class="t b" style="left:1357.60px;top:574.10px;">是否锁单</span>
<span class="t b" style="left:1443.70px;top:574.10px;">创建时间</span>
<span class="t b" style="left:1623.60px;top:574.10px;">支付时间</span>
<span class="t b" style="left:1803.50px;top:574.10px;">支付方式</span>
<div style="left:272.00px;top:566.30px;width:13.80px;height:13.80px;border:1px solid #d9d9d9;border-radius:3.6px;background:#fff"></div>
<div style="left:275.40px;top:569.70px;width:7.00px;height:7.00px;background:#1677ff"></div>
<span class="t n" style="left:308.20px;top:610.56px;">F251128093350812</span>
<span class="t" style="left:488.20px;top:610.56px;">B-1-5</span>
<span class="t" style="left:574.60px;top:610.56px;">测试</span>
<span class="t" style="left:660.80px;top:610.56px;">2025-09</span>
<span class="t" style="left:747.20px;top:610.56px;">违约金 &gt; 按面积通用直算-...</span>
<span class="t" style="left:927.20px;top:610.56px;">99.9</span>
<span class="t" style="left:1013.30px;top:610.56px;">0</span>
<span class="t" style="left:1099.40px;top:610.56px;">589.41</span>
<span class="t" style="left:1185.60px;top:610.56px;">689.31</span>
<span class="t" style="left:1271.60px;top:610.56px;">待缴纳</span>
<span class="t" style="left:1357.60px;top:610.56px;">未锁定</span>
<span class="t n2" style="left:1443.70px;top:610.56px;">2025-11-28 09:33:51</span>
<div style="left:272.00px;top:602.96px;width:13.80px;height:13.80px;background:#1677ff;border-radius:3.6px"></div>
<svg class="i" style="left:272px;top:602.96px" width="13.8" height="13.8" viewBox="0 0 14 14" fill="none" stroke="#fff" stroke-width="1.45"><path d="M3.4 7.1 L6 9.6 L10.6 4.5"/></svg>
<span class="t n" style="left:308.20px;top:647.68px;">F251128093350874</span>
<span class="t" style="left:488.20px;top:647.68px;">B-1-5</span>
<span class="t" style="left:574.60px;top:647.68px;">测试</span>
<span class="t" style="left:660.80px;top:647.68px;">2025-09</span>
<span class="t" style="left:747.20px;top:647.68px;">充电网水费 &gt; 按面积阶梯计...</span>
<span class="t" style="left:927.20px;top:647.68px;">222</span>
<span class="t" style="left:1013.30px;top:647.68px;">0</span>
<span class="t" style="left:1099.40px;top:647.68px;">2175.6</span>
<span class="t" style="left:1185.60px;top:647.68px;">2397.6</span>
<span class="t" style="left:1271.60px;top:647.68px;">待缴纳</span>
<span class="t" style="left:1357.60px;top:647.68px;">未锁定</span>
<span class="t n2" style="left:1443.70px;top:647.68px;">2025-11-28 09:33:51</span>
<div style="left:272.00px;top:640.08px;width:13.80px;height:13.80px;background:#1677ff;border-radius:3.6px"></div>
<svg class="i" style="left:272px;top:640.08px" width="13.8" height="13.8" viewBox="0 0 14 14" fill="none" stroke="#fff" stroke-width="1.45"><path d="M3.4 7.1 L6 9.6 L10.6 4.5"/></svg>
<span class="t n" style="left:308.20px;top:684.80px;">F251128093350911</span>
<span class="t" style="left:488.20px;top:684.80px;">B-1-5</span>
<span class="t" style="left:574.60px;top:684.80px;">测试</span>
<span class="t" style="left:660.80px;top:684.80px;">2025-09</span>
<span class="t" style="left:747.20px;top:684.80px;">垃圾处理费 &gt; 按用量通用</span>
<span class="t" style="left:927.20px;top:684.80px;">0</span>
<span class="t" style="left:1013.30px;top:684.80px;">0</span>
<span class="t" style="left:1099.40px;top:684.80px;">0</span>
<span class="t" style="left:1185.60px;top:684.80px;">0</span>
<span class="t" style="left:1271.60px;top:684.80px;">待缴纳</span>
<span class="t" style="left:1357.60px;top:684.80px;">未锁定</span>
<span class="t n2" style="left:1443.70px;top:684.80px;">2025-11-28 09:33:51</span>
<div style="left:272.00px;top:677.20px;width:13.80px;height:13.80px;border:1px solid #d9d9d9;border-radius:3.6px;background:#fff"></div>
<span class="t n" style="left:308.20px;top:721.92px;">F251128093350947</span>
<span class="t" style="left:488.20px;top:721.92px;">B-1-5</span>
<span class="t" style="left:574.60px;top:721.92px;">测试</span>
<span class="t" style="left:660.80px;top:721.92px;">2025-09</span>
<span class="t" style="left:747.20px;top:721.92px;">排污费 &gt; 用量阶梯计算</span>
<span class="t" style="left:927.20px;top:721.92px;">0</span>
<span class="t" style="left:1013.30px;top:721.92px;">0</span>
<span class="t" style="left:1099.40px;top:721.92px;">0</span>
<span class="t" style="left:1185.60px;top:721.92px;">0</span>
<span class="t" style="left:1271.60px;top:721.92px;">待缴纳</span>
<span class="t" style="left:1357.60px;top:721.92px;">未锁定</span>
<span class="t n2" style="left:1443.70px;top:721.92px;">2025-11-28 09:33:51</span>
<div style="left:272.00px;top:714.32px;width:13.80px;height:13.80px;border:1px solid #d9d9d9;border-radius:3.6px;background:#fff"></div>
<span class="t n" style="left:308.20px;top:759.04px;">F251128093350983</span>
<span class="t" style="left:488.20px;top:759.04px;">B-1-5</span>
<span class="t" style="left:574.60px;top:759.04px;">测试</span>
<span class="t" style="left:660.80px;top:759.04px;">2025-09</span>
<span class="t" style="left:747.20px;top:759.04px;">转供电服务费 &gt; 固定金额</span>
<span class="t" style="left:927.20px;top:759.04px;">1</span>
<span class="t" style="left:1013.30px;top:759.04px;">0</span>
<span class="t" style="left:1099.40px;top:759.04px;">0</span>
<span class="t" style="left:1185.60px;top:759.04px;">1</span>
<span class="t" style="left:1271.60px;top:759.04px;">待缴纳</span>
<span class="t" style="left:1357.60px;top:759.04px;">未锁定</span>
<span class="t n2" style="left:1443.70px;top:759.04px;">2025-11-28 09:33:51</span>
<div style="left:272.00px;top:751.44px;width:13.80px;height:13.80px;border:1px solid #d9d9d9;border-radius:3.6px;background:#fff"></div>
<div style="left:257.30px;top:776.60px;width:1700.00px;height:14.50px;background:#fafafa;border-left:1px solid #f0f0f0"></div>
<svg class="i" style="left:262.4px;top:780.50px" width="8" height="9.4" viewBox="0 0 8 9.4"><path d="M0.4 4.7 L7.4 0.2 V9.2 Z" fill="#8a8a8a"/></svg>
<div style="left:275.80px;top:780.60px;width:1700.00px;height:9.20px;background:#8b8b8b;border-radius:4.6px 0 0 4.6px"></div>
<div style="left:265.00px;top:799.00px;width:1700.00px;height:1.00px;background:#ececec"></div>
<div class="wm" style="left:280.80px;top:437.80px;width:200.00px;height:18.00px;">蒋燕 2025-11-28 10:48</div>
<div class="wm" style="left:639.80px;top:437.80px;width:200.00px;height:18.00px;">蒋燕 2025-11-28 10:48</div>
<div class="wm" style="left:998.80px;top:437.80px;width:200.00px;height:18.00px;">蒋燕 2025-11-28 10:48</div>
<div class="wm" style="left:1357.80px;top:437.80px;width:200.00px;height:18.00px;">蒋燕 2025-11-28 10:48</div>
<div class="wm" style="left:1716.80px;top:437.80px;width:200.00px;height:18.00px;">蒋燕 2025-11-28 10:48</div>
<div class="wm" style="left:2075.80px;top:437.80px;width:200.00px;height:18.00px;">蒋燕 2025-11-28 10:48</div>
<div class="wm" style="left:280.80px;top:618.80px;width:200.00px;height:18.00px;">蒋燕 2025-11-28 10:48</div>
<div class="wm" style="left:639.80px;top:618.80px;width:200.00px;height:18.00px;">蒋燕 2025-11-28 10:48</div>
<div class="wm" style="left:998.80px;top:618.80px;width:200.00px;height:18.00px;">蒋燕 2025-11-28 10:48</div>
<div class="wm" style="left:1357.80px;top:618.80px;width:200.00px;height:18.00px;">蒋燕 2025-11-28 10:48</div>
<div class="wm" style="left:1716.80px;top:618.80px;width:200.00px;height:18.00px;">蒋燕 2025-11-28 10:48</div>
<div class="wm" style="left:2075.80px;top:618.80px;width:200.00px;height:18.00px;">蒋燕 2025-11-28 10:48</div>
<div class="wm" style="left:280.80px;top:799.80px;width:200.00px;height:18.00px;">蒋燕 2025-11-28 10:48</div>
<div class="wm" style="left:639.80px;top:799.80px;width:200.00px;height:18.00px;">蒋燕 2025-11-28 10:48</div>
<div class="wm" style="left:998.80px;top:799.80px;width:200.00px;height:18.00px;">蒋燕 2025-11-28 10:48</div>
<div class="wm" style="left:1357.80px;top:799.80px;width:200.00px;height:18.00px;">蒋燕 2025-11-28 10:48</div>
<div class="wm" style="left:1716.80px;top:799.80px;width:200.00px;height:18.00px;">蒋燕 2025-11-28 10:48</div>
<div class="wm" style="left:2075.80px;top:799.80px;width:200.00px;height:18.00px;">蒋燕 2025-11-28 10:48</div>
<div class="wm" style="left:280.80px;top:980.80px;width:200.00px;height:18.00px;">蒋燕 2025-11-28 10:48</div>
<div class="wm" style="left:639.80px;top:980.80px;width:200.00px;height:18.00px;">蒋燕 2025-11-28 10:48</div>
<div class="wm" style="left:998.80px;top:980.80px;width:200.00px;height:18.00px;">蒋燕 2025-11-28 10:48</div>
<div class="wm" style="left:1357.80px;top:980.80px;width:200.00px;height:18.00px;">蒋燕 2025-11-28 10:48</div>
<div class="wm" style="left:1716.80px;top:980.80px;width:200.00px;height:18.00px;">蒋燕 2025-11-28 10:48</div>
<div class="wm" style="left:2075.80px;top:980.80px;width:200.00px;height:18.00px;">蒋燕 2025-11-28 10:48</div>
<div style="left:96.00px;top:285.00px;width:141.10px;height:900.00px;background:#001529"></div>
<svg class="i" style="left:110.00px;top:290.00px" width="28" height="28" viewBox="-14 -14 28 28"><g transform="rotate(28.6)"><circle cx="0" cy="-12.2" r="1.5" fill="#2f9fa6"/><path d="M-5.38 -10.86 A5.5 5.5 0 0 0 5.38 -10.86" stroke="#2f9fa6" stroke-width="1.9" fill="none" stroke-linecap="round"/><path d="M-2.53 -9.88 A3.3 3.3 0 0 0 2.53 -9.88" stroke="#d9982a" stroke-width="0.95" fill="none" stroke-linecap="round"/></g><g transform="rotate(100.6)"><circle cx="0" cy="-12.2" r="1.5" fill="#2f9fa6"/><path d="M-5.38 -10.86 A5.5 5.5 0 0 0 5.38 -10.86" stroke="#2f9fa6" stroke-width="1.9" fill="none" stroke-linecap="round"/><path d="M-2.53 -9.88 A3.3 3.3 0 0 0 2.53 -9.88" stroke="#d9982a" stroke-width="0.95" fill="none" stroke-linecap="round"/></g><g transform="rotate(172.6)"><circle cx="0" cy="-12.2" r="1.5" fill="#2f9fa6"/><path d="M-5.38 -10.86 A5.5 5.5 0 0 0 5.38 -10.86" stroke="#2f9fa6" stroke-width="1.9" fill="none" stroke-linecap="round"/><path d="M-2.53 -9.88 A3.3 3.3 0 0 0 2.53 -9.88" stroke="#d9982a" stroke-width="0.95" fill="none" stroke-linecap="round"/></g><g transform="rotate(244.6)"><circle cx="0" cy="-12.2" r="1.5" fill="#2f9fa6"/><path d="M-5.38 -10.86 A5.5 5.5 0 0 0 5.38 -10.86" stroke="#2f9fa6" stroke-width="1.9" fill="none" stroke-linecap="round"/><path d="M-2.53 -9.88 A3.3 3.3 0 0 0 2.53 -9.88" stroke="#d9982a" stroke-width="0.95" fill="none" stroke-linecap="round"/></g><g transform="rotate(316.6)"><circle cx="0" cy="-12.2" r="1.5" fill="#2f9fa6"/><path d="M-5.38 -10.86 A5.5 5.5 0 0 0 5.38 -10.86" stroke="#2f9fa6" stroke-width="1.9" fill="none" stroke-linecap="round"/><path d="M-2.53 -9.88 A3.3 3.3 0 0 0 2.53 -9.88" stroke="#d9982a" stroke-width="0.95" fill="none" stroke-linecap="round"/></g><circle r="3.5" fill="none" stroke="#2f9fa6" stroke-width="1.9"/></svg>
<span class="t" style="left:167.00px;top:304.00px;color:#fff;font-weight:700;font-size:14.4px">幸福家园</span>
<div style="left:101.00px;top:364.30px;width:133.00px;height:36.00px;background:#1677ff;border-radius:7.2px"></div>
<svg class="i" style="left:121.40px;top:336.20px;color:rgba(255,255,255,.65)" width="13.5" height="13.5" viewBox="0 0 14 14" fill="none" stroke="currentColor" stroke-width="1.1" stroke-linecap="round" stroke-linejoin="round"><path d="M1.2 6.6 L7 1.6 L12.8 6.6"/><path d="M2.8 5.6 V12.2 H11.2 V5.6"/><path d="M5.6 12.2 V9 H8.4 V12.2"/></svg>
<span class="t" style="left:143.60px;top:344.00px;color:rgba(255,255,255,.65);font-weight:500;">房屋账单</span>
<svg class="i" style="left:121.40px;top:375.20px;color:#fff" width="13.5" height="13.5" viewBox="0 0 14 14" fill="none" stroke="currentColor" stroke-width="1.1" stroke-linecap="round" stroke-linejoin="round"><rect x="1.5" y="1.5" width="11" height="11" rx="0.8"/><path d="M4.2 4.6h0.6M6.6 4.6h3.4M4.2 7h0.6M6.6 7h3.4M4.2 9.4h0.6M6.6 9.4h3.4" stroke-width="1"/></svg>
<span class="t" style="left:143.60px;top:383.00px;color:#fff;font-weight:500;">项目账单</span>
<svg class="i" style="left:121.40px;top:415.20px;color:rgba(255,255,255,.65)" width="13.5" height="13.5" viewBox="0 0 14 14" fill="none" stroke="currentColor" stroke-width="1.1" stroke-linecap="round" stroke-linejoin="round"><path d="M12.3 5.2 A5.6 5.6 0 1 0 12.3 8.8"/><path d="M7 3.8 V7.2 L9.2 8.6"/><path d="M10.4 7 H13"/></svg>
<span class="t" style="left:143.60px;top:423.00px;color:rgba(255,255,255,.65);font-weight:500;">账单记录</span>
<svg class="i" style="left:207.30px;top:415.60px;color:rgba(255,255,255,.65)" width="11" height="11" viewBox="0 0 14 14" fill="none" stroke="currentColor" stroke-width="1.7" stroke-linecap="round" stroke-linejoin="round"><path d="M3 5 L7 9 L11 5"/></svg>
<svg class="i" style="left:121.40px;top:458.20px;color:rgba(255,255,255,.65)" width="13.5" height="13.5" viewBox="0 0 14 14" fill="none" stroke="currentColor" stroke-width="1.1" stroke-linecap="round" stroke-linejoin="round"><path d="M7 1.4 L12 3 V7 C12 10 9.6 11.9 7 12.8 C4.4 11.9 2 10 2 7 V3 Z"/><path d="M4.8 6.8 L6.5 8.5 L9.4 5.4"/></svg>
<span class="t" style="left:143.60px;top:466.00px;color:rgba(255,255,255,.65);font-weight:500;">费用托收</span>
<svg class="i" style="left:207.30px;top:458.60px;color:rgba(255,255,255,.65)" width="11" height="11" viewBox="0 0 14 14" fill="none" stroke="currentColor" stroke-width="1.7" stroke-linecap="round" stroke-linejoin="round"><path d="M3 5 L7 9 L11 5"/></svg>
<svg class="i" style="left:121.40px;top:501.20px;color:rgba(255,255,255,.65)" width="13.5" height="13.5" viewBox="0 0 14 14" fill="none" stroke="currentColor" stroke-width="1.1" stroke-linecap="round" stroke-linejoin="round"><rect x="2.2" y="1.4" width="9.6" height="11.2" rx="0.6"/><path d="M5 4.2 L7 6.8 L9 4.2 M7 6.8 V10.6 M5.3 7.6 H8.7 M5.3 9.2 H8.7" stroke-width="0.9"/></svg>
<span class="t" style="left:143.60px;top:509.00px;color:rgba(255,255,255,.65);font-weight:500;">押金管理</span>
<svg class="i" style="left:121.40px;top:541.20px;color:rgba(255,255,255,.65)" width="13.5" height="13.5" viewBox="0 0 14 14" fill="none" stroke="currentColor" stroke-width="1.1" stroke-linecap="round" stroke-linejoin="round"><rect x="1.6" y="2.6" width="10.8" height="10" rx="0.6"/><path d="M4.4 1.2 V3.6 M9.6 1.2 V3.6"/><path d="M5.4 5.6 L7 7.6 L8.6 5.6 M7 7.6 V10.8 M5.6 8.4 H8.4 M5.6 9.6 H8.4" stroke-width="0.9"/></svg>
<span class="t" style="left:143.60px;top:549.00px;color:rgba(255,255,255,.65);font-weight:500;">房屋收费绑定</span>
<svg class="i" style="left:121.40px;top:580.20px;color:rgba(255,255,255,.65)" width="13.5" height="13.5" viewBox="0 0 14 14" fill="none" stroke="currentColor" stroke-width="1.1" stroke-linecap="round" stroke-linejoin="round"><circle cx="7" cy="7" r="4"/><circle cx="7" cy="7" r="1.4" fill="currentColor" stroke="none"/><path d="M7 0.8 V3 M7 11 V13.2 M0.8 7 H3 M11 7 H13.2"/></svg>
<span class="t" style="left:143.60px;top:588.00px;color:rgba(255,255,255,.65);font-weight:500;">收费标准</span></div><div id="mask"></div><div style="left:539.20px;top:90.20px;width:810.00px;height:300.00px;background:#fff;border-radius:7.2px;box-shadow:0 6px 16px 0 rgba(0,0,0,.08),0 3px 6px -4px rgba(0,0,0,.12),0 9px 28px 8px rgba(0,0,0,.05)"></div>
<span class="t" style="left:561.00px;top:119.00px;font-size:14.4px;font-weight:700">批量免除违约金</span>
<svg class="i" style="left:1315.80px;top:106.80px;color:rgba(0,0,0,.47)" width="16.5" height="16.5" viewBox="0 0 14 14" fill="none" stroke="currentColor" stroke-width="1.35" stroke-linecap="round" stroke-linejoin="round"><path d="M2.6 2.6 L11.4 11.4 M11.4 2.6 L2.6 11.4"/></svg>
<span class="t" style="left:652.30px;top:152.00px;">免除违约金金额<i class="c">:</i></span>
<span class="t n" style="left:752.70px;top:152.00px;">2765.0099999999998</span>
<span class="t" style="left:652.30px;top:203.00px;">免除违约金原因<i class="c">:</i></span>
<div class="inp" style="left:751.80px;top:187.10px;width:575.20px;height:48.60px;"></div>
<span class="t ph" style="left:764.00px;top:203.00px;">请输入免除违约金原因</span>
<svg class="i" style="left:1316.2px;top:224.50px" width="10" height="10" viewBox="0 0 10 10" stroke="#555" stroke-width="1" fill="none"><path d="M9 1 L1 9 M9 5 L5 9"/></svg>
<div class="btn" style="left:1205.20px;top:261.00px;width:57.60px;height:28.80px;"></div>
<span class="t" style="left:1219.40px;top:275.60px;">取 消</span>
<div class="btnp" style="left:1270.10px;top:261.00px;width:56.80px;height:28.80px;"></div>
<span class="t" style="left:1284.00px;top:275.60px;color:#fff;font-weight:700">保 存</span>
<div style="left:627.90px;top:139.00px;width:283.80px;height:31.70px;border:3.2px solid #fd1208;border-radius:13.5px"></div>
<svg class="i" style="left:900px;top:102px" width="270" height="80" viewBox="900 150 270 80"><path d="M1151.0 166.0 L1146.6 166.5 L1137.8 167.9 L1124.8 170.1 L1107.4 173.2 L1085.6 177.2 L1053.0 183.2 L1020.4 189.3 L976.9 197.5 L933.3 205.7 L935.7 200.0 L921.3 210.7 L938.3 216.0 L934.7 211.3 L977.9 202.5 L1021.2 193.7 L1053.7 187.0 L1086.2 180.3 L1107.8 175.8 L1125.1 172.1 L1138.1 169.2 L1146.7 167.2 Z" fill="#fd1208"/></svg></div>
<div id="s2"><div class="pg" style="left:-97px;top:-344px"><div style="left:237.00px;top:285.00px;width:1700.00px;height:900.00px;background:#f5f5f5"></div>
<div style="left:237.00px;top:285.00px;width:1700.00px;height:40.50px;background:#1677ff"></div>
<div style="left:537.00px;top:285.00px;width:105.00px;height:40.50px;background:#0958d9"></div>
<svg class="i" style="left:250.40px;top:298.80px;color:#fff" width="13.8" height="13.8" viewBox="0 0 14 14" fill="none" stroke="currentColor" stroke-width="1.1" stroke-linecap="round" stroke-linejoin="round"><rect x="1.2" y="3" width="11.6" height="9.4" rx="0.6"/><path d="M4 1.6 V4.2 M10 1.6 V4.2"/><circle cx="7" cy="6.6" r="1.3"/><path d="M4.6 10.6 C5 8.6 9 8.6 9.4 10.6"/></svg>
<span class="t" style="left:277.00px;top:306.60px;color:#fff;font-weight:500">业务受理</span>
<svg class="i" style="left:356.40px;top:298.80px;color:#fff" width="13.8" height="13.8" viewBox="0 0 14 14" fill="none" stroke="currentColor" stroke-width="1.1" stroke-linecap="round" stroke-linejoin="round"><path d="M2.4 1.4 H11.6 V12.6 H2.4 Z"/><path d="M7.4 1.4 V5 H9.8 V1.4"/></svg>
<span class="t" style="left:381.00px;top:306.60px;color:#fff;font-weight:500">资料库</span>
<svg class="i" style="left:446.40px;top:298.80px;color:#fff" width="13.8" height="13.8" viewBox="0 0 14 14" fill="none" stroke="currentColor" stroke-width="1.1" stroke-linecap="round" stroke-linejoin="round"><path d="M1.2 6.6 L7 1.6 L12.8 6.6"/><path d="M2.8 5.6 V12.2 H11.2 V5.6"/><path d="M5.6 12.2 V9 H8.4 V12.2"/></svg>
<span class="t" style="left:473.00px;top:306.60px;color:#fff;font-weight:500">资产住户</span>
<svg class="i" style="left:551.40px;top:298.80px;color:#fff" width="13.8" height="13.8" viewBox="0 0 14 14" fill="none" stroke="currentColor" stroke-width="1.1" stroke-linecap="round" stroke-linejoin="round"><path d="M2.4 1.6 H11.6 V10.4 L7 12.8 L2.4 10.4 Z"/><path d="M5.2 3.8 L7 6.2 L8.8 3.8 M7 6.2 V9.6 M5.4 7 H8.6 M5.4 8.4 H8.6" stroke-width="0.9"/></svg>
<span class="t" style="left:577.00px;top:306.60px;color:#fff;font-weight:500">物业收费</span>
<svg class="i" style="left:655.40px;top:298.80px;color:#fff" width="13.8" height="13.8" viewBox="0 0 14 14" fill="none" stroke="currentColor" stroke-width="1.1" stroke-linecap="round" stroke-linejoin="round"><rect x="2.4" y="2" width="9.2" height="7.4" rx="0.5"/><path d="M1 12 H13 M2.4 9.4 L1 12 M11.6 9.4 L13 12"/></svg>
<span class="t" style="left:681.00px;top:306.60px;color:#fff;font-weight:500">物业办公</span>
<svg class="i" style="left:759.40px;top:298.80px;color:#fff" width="13.8" height="13.8" viewBox="0 0 14 14" fill="none" stroke="currentColor" stroke-width="1.1" stroke-linecap="round" stroke-linejoin="round"><rect x="1.6" y="2.6" width="10.8" height="10" rx="0.6"/><path d="M4.4 1.2 V3.6 M9.6 1.2 V3.6"/><path d="M5.4 5.6 L7 7.6 L8.6 5.6 M7 7.6 V10.8 M5.6 8.4 H8.4 M5.6 9.6 H8.4" stroke-width="0.9"/></svg>
<span class="t" style="left:785.30px;top:306.60px;color:#fff;font-weight:500">财务</span>
<svg class="i" style="left:838.40px;top:298.80px;color:#fff" width="13.8" height="13.8" viewBox="0 0 14 14" fill="none" stroke="currentColor" stroke-width="1.1" stroke-linecap="round" stroke-linejoin="round"><circle cx="7" cy="7.4" r="5.4"/><path d="M7 7.6 L9.4 4.8 M3.6 7.4 H4.4 M9.6 7.4 H10.4 M7 4 V4.8"/></svg>
<span class="t" style="left:864.30px;top:306.60px;color:#fff;font-weight:500">智能设备</span>
<svg class="i" style="left:943.40px;top:298.80px;color:#fff" width="13.8" height="13.8" viewBox="0 0 14 14" fill="none" stroke="currentColor" stroke-width="1.1" stroke-linecap="round" stroke-linejoin="round"><path d="M1.6 12.4 V6.8 L3.2 2.6 H10.8 L12.4 6.8 V12.4 Z"/><path d="M1.6 6.8 H12.4 M3.8 9.4 H5 M9 9.4 H10.2"/></svg>
<span class="t" style="left:968.60px;top:306.60px;color:#fff;font-weight:500">停车</span>
<svg class="i" style="left:1022.40px;top:298.80px;color:#fff" width="13.8" height="13.8" viewBox="0 0 14 14" fill="none" stroke="currentColor" stroke-width="1.1" stroke-linecap="round" stroke-linejoin="round"><path d="M1.4 5.4 L7 1.6 L12.6 5.4 Z"/><path d="M1.6 12.4 H12.4 M3.4 5.6 V12 M5.8 5.6 V12 M8.2 5.6 V12 M10.6 5.6 V12"/></svg>
<span class="t" style="left:1048.00px;top:306.60px;color:#fff;font-weight:500">业委会履职</span>
<svg class="i" style="left:1138.40px;top:298.80px;color:#fff" width="13.8" height="13.8" viewBox="0 0 14 14" fill="none" stroke="currentColor" stroke-width="1.1" stroke-linecap="round" stroke-linejoin="round"><path d="M1.6 5 H4.6 L11.6 1.8 V12.2 L4.6 9 H1.6 Z"/><path d="M4.6 5 V9"/></svg>
<span class="t" style="left:1164.00px;top:306.60px;color:#fff;font-weight:500">通知公告</span>
<svg class="i" style="left:1243.40px;top:298.80px;color:#fff" width="13.8" height="13.8" viewBox="0 0 14 14" fill="none" stroke="currentColor" stroke-width="1.1" stroke-linecap="round" stroke-linejoin="round"><circle cx="7" cy="7.4" r="5.2"/><path d="M1.8 3.4 C2.6 2 3.8 1.8 4.6 2.6"/><path d="M5.4 6.4 V7 M8.8 6.4 V7"/></svg>
<span class="t" style="left:1269.00px;top:306.60px;color:#fff;font-weight:500">文化活动</span>
<svg class="i" style="left:1348.40px;top:298.80px;color:#fff" width="13.8" height="13.8" viewBox="0 0 14 14" fill="none" stroke="currentColor" stroke-width="1.1" stroke-linecap="round" stroke-linejoin="round"><path d="M3.6 10.6 V7.4 A3.4 3.4 0 0 1 10.4 7.4 V10.6"/><path d="M1.6 12.6 H12.4 M2.8 10.6 H11.2 M7 1 V2.2 M2.2 2.6 L3 3.6 M11.8 2.6 L11 3.6"/></svg>
<span class="t" style="left:1373.00px;top:306.60px;color:#fff;font-weight:500">设备预警</span>
<svg class="i" style="left:1451.80px;top:298.80px;color:#fff" width="13.8" height="13.8" viewBox="0 0 14 14" fill="none" stroke="currentColor" stroke-width="1.1" stroke-linecap="round" stroke-linejoin="round"><circle cx="7" cy="7" r="1.9"/><path d="M5.52 2.70 L5.77 1.23 L8.23 1.23 L8.48 2.70 L9.99 3.57 L11.38 3.05 L12.61 5.18 L11.47 6.13 L11.47 7.87 L12.61 8.82 L11.38 10.95 L9.99 10.43 L8.48 11.30 L8.23 12.77 L5.77 12.77 L5.52 11.30 L4.01 10.43 L2.62 10.95 L1.39 8.82 L2.53 7.87 L2.53 6.13 L1.39 5.18 L2.62 3.05 L4.01 3.57 Z"/></svg>
<span class="t" style="left:1477.00px;top:306.60px;color:#fff;font-weight:500">物业设置</span>
<svg class="i" style="left:1556.60px;top:298.80px;color:#fff" width="13.8" height="13.8" viewBox="0 0 14 14" fill="none" stroke="currentColor" stroke-width="1.1" stroke-linecap="round" stroke-linejoin="round"><path d="M7 1.2 L12.2 4 V10 L7 12.8 L1.8 10 V4 Z"/><path d="M1.8 4 L7 6.8 L12.2 4 M7 6.8 V12.8"/><path d="M4.4 2.6 L9.6 5.4" stroke-width="0.8"/></svg>
<span class="t" style="left:1581.00px;top:306.60px;color:#fff;font-weight:500">iot中控</span>
<div style="left:237.00px;top:325.50px;width:1700.00px;height:36.00px;background:#fff;border-bottom:1px solid #f0f0f0"></div>
<svg class="i" style="left:246.00px;top:338.00px;color:rgba(0,0,0,.88)" width="13" height="13" viewBox="0 0 14 14" fill="none" stroke="currentColor" stroke-width="1.1" stroke-linecap="round" stroke-linejoin="round"><path d="M1.4 2.4 H12.6 M5.8 7 H12.6 M1.4 11.6 H12.6"/><path d="M3.8 5 L1.4 7 L3.8 9 Z" fill="currentColor" stroke-width="0.6"/></svg>
<svg class="i" style="left:276.50px;top:337.00px;color:rgba(0,0,0,.88)" width="14" height="14" viewBox="0 0 14 14" fill="none" stroke="currentColor" stroke-width="1.2" stroke-linecap="round" stroke-linejoin="round"><path d="M1.2 6.6 L7 1.6 L12.8 6.6"/><path d="M2.8 5.6 V12.2 H11.2 V5.6"/><path d="M5.6 12.2 V9 H8.4 V12.2"/></svg>
<span class="t g" style="left:307.50px;top:344.50px;">物业收费</span>
<span class="t g" style="left:366.50px;top:344.50px;">&gt;</span>
<span class="t" style="left:380.50px;top:344.50px;">项目账单</span>
<span class="t" style="left:1652.50px;top:344.00px;">中海玫瑰小区</span>
<svg class="i" style="left:1732.50px;top:338.40px;color:rgba(0,0,0,.88)" width="11.5" height="11.5" viewBox="0 0 14 14" fill="none" stroke="currentColor" stroke-width="1.6" stroke-linecap="round" stroke-linejoin="round"><path d="M1.6 4.2 L7 10 L12.4 4.2"/></svg>
<svg class="i" style="left:1765.50px;top:336.50px;color:rgba(0,0,0,.88)" width="14" height="14" viewBox="0 0 14 14" fill="none" stroke="currentColor" stroke-width="1.2" stroke-linecap="round" stroke-linejoin="round"><path d="M3.2 10.4 V6 A3.8 3.8 0 0 1 10.8 6 V10.4"/><path d="M1.8 10.4 H12.2 M5.8 12.6 H8.2 M7 1 V2"/></svg>
<svg class="i" style="left:1813.00px;top:337.50px;color:rgba(0,0,0,.88)" width="15" height="15" viewBox="0 0 14 14" fill="none" stroke="currentColor" stroke-width="1.2" stroke-linecap="round" stroke-linejoin="round"><circle cx="7" cy="7" r="1.9"/><path d="M5.52 2.70 L5.77 1.23 L8.23 1.23 L8.48 2.70 L9.99 3.57 L11.38 3.05 L12.61 5.18 L11.47 6.13 L11.47 7.87 L12.61 8.82 L11.38 10.95 L9.99 10.43 L8.48 11.30 L8.23 12.77 L5.77 12.77 L5.52 11.30 L4.01 10.43 L2.62 10.95 L1.39 8.82 L2.53 7.87 L2.53 6.13 L1.39 5.18 L2.62 3.05 L4.01 3.57 Z"/></svg>
<div style="left:1859.40px;top:335.10px;width:18.00px;height:18.00px;background:#f56a00;border-radius:50%;color:#fff;font-size:10.5px;font-weight:500;line-height:18px;text-align:center">蒋</div>
<span class="t" style="left:1887.00px;top:344.50px;">蒋燕</span>
<div style="left:237.00px;top:361.50px;width:1700.00px;height:37.00px;background:#fff;border-bottom:1px solid #f0f0f0"></div>
<div style="left:452.00px;top:366.30px;width:104.00px;height:27.00px;background:#ededed;border-radius:7px 7px 0 0;border-bottom:2px solid #1677ff"></div>
<span class="t" style="left:278.50px;top:381.80px;">首页</span>
<svg class="i" style="left:310.00px;top:374.90px;color:rgba(0,0,0,.7)" width="13.3" height="13.3" viewBox="0 0 14 14" fill="none" stroke="currentColor" stroke-width="1.05" stroke-linecap="round" stroke-linejoin="round"><path d="M1.2 6.6 L7 1.6 L12.8 6.6"/><path d="M2.8 5.6 V12.2 H11.2 V5.6"/><path d="M5.6 12.2 V9 H8.4 V12.2"/></svg>
<span class="t" style="left:362.80px;top:381.80px;color:rgba(0,0,0,.88)">缴费记录</span>
<svg class="i" style="left:420.90px;top:377.80px;color:rgba(0,0,0,.65)" width="10.2" height="10.2" viewBox="0 0 14 14" fill="none" stroke="currentColor" stroke-width="1.25" stroke-linecap="round" stroke-linejoin="round"><path d="M2.6 2.6 L11.4 11.4 M11.4 2.6 L2.6 11.4"/></svg>
<span class="t" style="left:471.00px;top:381.80px;color:#1677ff;font-weight:500">项目账单</span>
<svg class="i" style="left:528.40px;top:377.80px;color:#1677ff" width="10.2" height="10.2" viewBox="0 0 14 14" fill="none" stroke="currentColor" stroke-width="1.25" stroke-linecap="round" stroke-linejoin="round"><path d="M2.6 2.6 L11.4 11.4 M11.4 2.6 L2.6 11.4"/></svg>
<span class="t" style="left:578.00px;top:381.80px;color:rgba(0,0,0,.88)">房屋收费绑定</span>
<svg class="i" style="left:661.70px;top:377.80px;color:rgba(0,0,0,.65)" width="10.2" height="10.2" viewBox="0 0 14 14" fill="none" stroke="currentColor" stroke-width="1.25" stroke-linecap="round" stroke-linejoin="round"><path d="M2.6 2.6 L11.4 11.4 M11.4 2.6 L2.6 11.4"/></svg>
<span class="t" style="left:711.50px;top:381.80px;color:rgba(0,0,0,.88)">收费标准</span>
<svg class="i" style="left:768.70px;top:377.80px;color:rgba(0,0,0,.65)" width="10.2" height="10.2" viewBox="0 0 14 14" fill="none" stroke="currentColor" stroke-width="1.25" stroke-linecap="round" stroke-linejoin="round"><path d="M2.6 2.6 L11.4 11.4 M11.4 2.6 L2.6 11.4"/></svg>
<span class="t" style="left:819.00px;top:381.80px;color:rgba(0,0,0,.88)">房屋账单</span>
<svg class="i" style="left:876.90px;top:377.80px;color:rgba(0,0,0,.65)" width="10.2" height="10.2" viewBox="0 0 14 14" fill="none" stroke="currentColor" stroke-width="1.25" stroke-linecap="round" stroke-linejoin="round"><path d="M2.6 2.6 L11.4 11.4 M11.4 2.6 L2.6 11.4"/></svg>
<span class="t" style="left:927.00px;top:381.80px;color:rgba(0,0,0,.88)">财务报表</span>
<svg class="i" style="left:984.90px;top:377.80px;color:rgba(0,0,0,.65)" width="10.2" height="10.2" viewBox="0 0 14 14" fill="none" stroke="currentColor" stroke-width="1.25" stroke-linecap="round" stroke-linejoin="round"><path d="M2.6 2.6 L11.4 11.4 M11.4 2.6 L2.6 11.4"/></svg>
<div style="left:246.25px;top:408.00px;width:1700.00px;height:85.00px;background:#fff"></div>
<span class="t" style="left:255.50px;top:432.50px;">房屋名称<i class="c">:</i></span>
<div class="inp" style="left:318.25px;top:417.00px;width:180.00px;height:28.80px;"></div>
<span class="t" style="left:328.50px;top:432.50px;">B-1-5</span>
<span class="t" style="left:505.00px;top:432.50px;">费用项目<i class="c">:</i></span>
<div class="inp" style="left:567.25px;top:417.00px;width:180.00px;height:28.80px;"></div>
<span class="t ph" style="left:578.00px;top:432.50px;">费用项目</span>
<span class="t" style="left:754.00px;top:432.50px;">房屋类型<i class="c">:</i></span>
<div class="inp" style="left:816.40px;top:417.00px;width:180.00px;height:28.80px;"></div>
<span class="t ph" style="left:827.00px;top:432.50px;">房屋类型</span>
<svg class="i" style="left:976.00px;top:426.50px;color:rgba(0,0,0,.25)" width="10.5" height="10.5" viewBox="0 0 14 14" fill="none" stroke="currentColor" stroke-width="1.2" stroke-linecap="round" stroke-linejoin="round"><path d="M1.6 4.2 L7 10 L12.4 4.2"/></svg>
<span class="t" style="left:1003.50px;top:432.50px;">账单月份<i class="c">:</i></span>
<div class="inp" style="left:1065.40px;top:417.00px;width:142.60px;height:28.80px;"></div>
<span class="t" style="left:1077.00px;top:432.50px;">2025-09</span>
<svg class="i" style="left:1185.50px;top:425.50px;color:rgba(0,0,0,.25)" width="13" height="13" viewBox="0 0 14 14" fill="none" stroke="currentColor" stroke-width="1.1" stroke-linecap="round" stroke-linejoin="round"><rect x="1.8" y="2.8" width="10.4" height="9.6" rx="0.6"/><path d="M1.8 5.8 H12.2 M4.6 1.4 V3.6 M9.4 1.4 V3.6"/></svg>
<span class="t" style="left:1217.00px;top:432.50px;">账单状态<i class="c">:</i></span>
<div class="inp" style="left:1279.00px;top:417.00px;width:126.00px;height:28.80px;"></div>
<span class="t ph" style="left:1290.00px;top:432.50px;">请选择账单状...</span>
<svg class="i" style="left:1384.60px;top:426.50px;color:rgba(0,0,0,.25)" width="10.5" height="10.5" viewBox="0 0 14 14" fill="none" stroke="currentColor" stroke-width="1.2" stroke-linecap="round" stroke-linejoin="round"><path d="M1.6 4.2 L7 10 L12.4 4.2"/></svg>
<span class="t" style="left:1412.00px;top:432.50px;">支付时间<i class="c">:</i></span>
<div class="inp" style="left:1474.40px;top:417.00px;width:233.40px;height:28.80px;"></div>
<span class="t ph" style="left:1485.50px;top:432.50px;">请输入开始...</span>
<svg class="i" style="left:1576.50px;top:426.00px;color:rgba(0,0,0,.25)" width="11.5" height="11.5" viewBox="0 0 14 14" fill="none" stroke="currentColor" stroke-width="1.0" stroke-linecap="round" stroke-linejoin="round"><path d="M1.4 8.4 H12.6 L9.4 5.2"/></svg>
<span class="t ph" style="left:1597.80px;top:432.50px;">请输入结束...</span>
<svg class="i" style="left:1684.80px;top:425.50px;color:rgba(0,0,0,.25)" width="13" height="13" viewBox="0 0 14 14" fill="none" stroke="currentColor" stroke-width="1.1" stroke-linecap="round" stroke-linejoin="round"><rect x="1.8" y="2.8" width="10.4" height="9.6" rx="0.6"/><path d="M1.8 5.8 H12.2 M4.6 1.4 V3.6 M9.4 1.4 V3.6"/></svg>
<span class="t" style="left:1715.30px;top:432.50px;">是否有违约金<i class="c">:</i></span>
<div class="inp" style="left:1804.00px;top:417.00px;width:180.00px;height:28.80px;"></div>
<span class="t ph" style="left:1815.00px;top:432.50px;">是否有违约金</span>
<div class="btnp" style="left:255.00px;top:455.30px;width:74.30px;height:28.80px;"></div>
<svg class="i" style="left:269.80px;top:463.60px;color:#fff" width="13.2" height="13.2" viewBox="0 0 14 14" fill="none" stroke="currentColor" stroke-width="1.45" stroke-linecap="round" stroke-linejoin="round"><circle cx="5.8" cy="5.8" r="3.9"/><path d="M8.7 8.7 L12.4 12.4"/></svg>
<span class="t w" style="left:290.00px;top:471.00px;">查询</span>
<div class="btn" style="left:338.30px;top:455.30px;width:74.00px;height:28.80px;"></div>
<svg class="i" style="left:352.60px;top:464.00px;color:rgba(0,0,0,.88)" width="13" height="13" viewBox="0 0 14 14" fill="none" stroke="currentColor" stroke-width="1.15" stroke-linecap="round" stroke-linejoin="round"><path d="M11.5 4.0 A5.4 5.4 0 1 0 12.2 8.6"/><path d="M11.9 1.9 L11.8 4.3 L9.5 4.2" stroke-width="1"/></svg>
<span class="t" style="left:373.30px;top:471.20px;">重置</span>
<div style="left:246.25px;top:503.00px;width:1700.00px;height:400.00px;background:#fff;border-radius:7px;box-shadow:0 0 9px rgba(0,0,0,.13)"></div>
<div class="btnp" style="left:257.00px;top:513.00px;width:80.30px;height:28.80px;"></div>
<span class="t w" style="left:272.00px;top:528.70px;">合并缴费</span>
<div class="btn" style="left:346.80px;top:513.00px;width:80.50px;height:28.80px;"></div>
<span class="t" style="left:362.00px;top:528.70px;">批量作废</span>
<div class="btn" style="left:438.00px;top:513.00px;width:136.80px;height:28.80px;border-color:#d0d7e2;"></div>
<span class="t" style="left:452.00px;top:528.70px;">批量操作违约金</span>
<svg class="i" style="left:547.30px;top:522.80px;color:rgba(0,0,0,.88)" width="11.5" height="11.5" viewBox="0 0 14 14" fill="none" stroke="currentColor" stroke-width="1.6" stroke-linecap="round" stroke-linejoin="round"><path d="M1.6 4.2 L7 10 L12.4 4.2"/></svg>
<div class="btn" style="left:584.40px;top:513.00px;width:58.40px;height:28.80px;"></div>
<span class="t" style="left:600.00px;top:528.70px;">导 出</span>
<div style="left:257.30px;top:555.00px;width:1700.00px;height:36.00px;background:#fafafa;border-top:1px solid #f0f0f0;border-left:1px solid #f0f0f0;border-radius:7px 0 0 0"></div>
<div style="left:257.30px;top:591.00px;width:1700.00px;height:37.12px;background:#e6f4ff;border-bottom:1px solid #f0f0f0;border-left:1px solid #f0f0f0"></div>
<div style="left:257.30px;top:628.12px;width:1700.00px;height:37.12px;background:#e6f4ff;border-bottom:1px solid #f0f0f0;border-left:1px solid #f0f0f0"></div>
<div style="left:257.30px;top:665.24px;width:1700.00px;height:37.12px;background:#fff;border-bottom:1px solid #f0f0f0;border-left:1px solid #f0f0f0"></div>
<div style="left:257.30px;top:702.36px;width:1700.00px;height:37.12px;background:#fff;border-bottom:1px solid #f0f0f0;border-left:1px solid #f0f0f0"></div>
<div style="left:257.30px;top:739.48px;width:1700.00px;height:37.12px;background:#fff;border-bottom:1px solid #f0f0f0;border-left:1px solid #f0f0f0"></div>
<div style="left:299.90px;top:555.00px;width:1.00px;height:221.60px;background:#f0f0f0"></div>
<div style="left:480.50px;top:555.00px;width:1.00px;height:221.60px;background:#f0f0f0"></div>
<div style="left:566.90px;top:555.00px;width:1.00px;height:221.60px;background:#f0f0f0"></div>
<div style="left:653.10px;top:555.00px;width:1.00px;height:221.60px;background:#f0f0f0"></div>
<div style="left:739.50px;top:555.00px;width:1.00px;height:221.60px;background:#f0f0f0"></div>
<div style="left:919.50px;top:555.00px;width:1.00px;height:221.60px;background:#f0f0f0"></div>
<div style="left:1005.60px;top:555.00px;width:1.00px;height:221.60px;background:#f0f0f0"></div>
<div style="left:1091.70px;top:555.00px;width:1.00px;height:221.60px;background:#f0f0f0"></div>
<div style="left:1177.90px;top:555.00px;width:1.00px;height:221.60px;background:#f0f0f0"></div>
<div style="left:1263.90px;top:555.00px;width:1.00px;height:221.60px;background:#f0f0f0"></div>
<div style="left:1349.90px;top:555.00px;width:1.00px;height:221.60px;background:#f0f0f0"></div>
<div style="left:1436.00px;top:555.00px;width:1.00px;height:221.60px;background:#f0f0f0"></div>
<div style="left:1615.90px;top:555.00px;width:1.00px;height:221.60px;background:#f0f0f0"></div>
<div style="left:1795.80px;top:555.00px;width:1.00px;height:221.60px;background:#f0f0f0"></div>
<div style="left:257.30px;top:590.00px;width:1700.00px;height:1.00px;background:#f0f0f0"></div>
<span class="t b" style="left:308.20px;top:574.10px;">账单编号</span>
<span class="t b" style="left:488.20px;top:574.10px;">房屋名称</span>
<span class="t b" style="left:574.60px;top:574.10px;">房屋类型</span>
<span class="t b" style="left:660.80px;top:574.10px;">账单月份</span>
<span class="t b" style="left:747.20px;top:574.10px;">收费项目 &gt; 收费标准</span>
<span class="t b" style="left:927.20px;top:574.10px;">应收金额</span>
<span class="t b" style="left:1013.30px;top:574.10px;">实收金额</span>
<span class="t b" style="left:1099.40px;top:574.10px;">违约金金额</span>
<span class="t b" style="left:1185.60px;top:574.10px;">欠收金额</span>
<span class="t b" style="left:1271.60px;top:574.10px;">账单状态</span>
<span class="t b" style="left:1357.60px;top:574.10px;">是否锁单</span>
<span class="t b" style="left:1443.70px;top:574.10px;">创建时间</span>
<span class="t b" style="left:1623.60px;top:574.10px;">支付时间</span>
<span class="t b" style="left:1803.50px;top:574.10px;">支付方式</span>
<div style="left:272.00px;top:566.30px;width:13.80px;height:13.80px;border:1px solid #d9d9d9;border-radius:3.6px;background:#fff"></div>
<div style="left:275.40px;top:569.70px;width:7.00px;height:7.00px;background:#1677ff"></div>
<span class="t n" style="left:308.20px;top:610.56px;">F251128093350812</span>
<span class="t" style="left:488.20px;top:610.56px;">B-1-5</span>
<span class="t" style="left:574.60px;top:610.56px;">测试</span>
<span class="t" style="left:660.80px;top:610.56px;">2025-09</span>
<span class="t" style="left:747.20px;top:610.56px;">违约金 &gt; 按面积通用直算-...</span>
<span class="t" style="left:927.20px;top:610.56px;">99.9</span>
<span class="t" style="left:1013.30px;top:610.56px;">0</span>
<span class="t" style="left:1099.40px;top:610.56px;">589.41</span>
<span class="t" style="left:1185.60px;top:610.56px;">689.31</span>
<span class="t" style="left:1271.60px;top:610.56px;">待缴纳</span>
<span class="t" style="left:1357.60px;top:610.56px;">未锁定</span>
<span class="t n2" style="left:1443.70px;top:610.56px;">2025-11-28 09:33:51</span>
<div style="left:272.00px;top:602.96px;width:13.80px;height:13.80px;background:#1677ff;border-radius:3.6px"></div>
<svg class="i" style="left:272px;top:602.96px" width="13.8" height="13.8" viewBox="0 0 14 14" fill="none" stroke="#fff" stroke-width="1.45"><path d="M3.4 7.1 L6 9.6 L10.6 4.5"/></svg>
<span class="t n" style="left:308.20px;top:647.68px;">F251128093350874</span>
<span class="t" style="left:488.20px;top:647.68px;">B-1-5</span>
<span class="t" style="left:574.60px;top:647.68px;">测试</span>
<span class="t" style="left:660.80px;top:647.68px;">2025-09</span>
<span class="t" style="left:747.20px;top:647.68px;">充电网水费 &gt; 按面积阶梯计...</span>
<span class="t" style="left:927.20px;top:647.68px;">222</span>
<span class="t" style="left:1013.30px;top:647.68px;">0</span>
<span class="t" style="left:1099.40px;top:647.68px;">2175.6</span>
<span class="t" style="left:1185.60px;top:647.68px;">2397.6</span>
<span class="t" style="left:1271.60px;top:647.68px;">待缴纳</span>
<span class="t" style="left:1357.60px;top:647.68px;">未锁定</span>
<span class="t n2" style="left:1443.70px;top:647.68px;">2025-11-28 09:33:51</span>
<div style="left:272.00px;top:640.08px;width:13.80px;height:13.80px;background:#1677ff;border-radius:3.6px"></div>
<svg class="i" style="left:272px;top:640.08px" width="13.8" height="13.8" viewBox="0 0 14 14" fill="none" stroke="#fff" stroke-width="1.45"><path d="M3.4 7.1 L6 9.6 L10.6 4.5"/></svg>
<span class="t n" style="left:308.20px;top:684.80px;">F251128093350911</span>
<span class="t" style="left:488.20px;top:684.80px;">B-1-5</span>
<span class="t" style="left:574.60px;top:684.80px;">测试</span>
<span class="t" style="left:660.80px;top:684.80px;">2025-09</span>
<span class="t" style="left:747.20px;top:684.80px;">垃圾处理费 &gt; 按用量通用</span>
<span class="t" style="left:927.20px;top:684.80px;">0</span>
<span class="t" style="left:1013.30px;top:684.80px;">0</span>
<span class="t" style="left:1099.40px;top:684.80px;">0</span>
<span class="t" style="left:1185.60px;top:684.80px;">0</span>
<span class="t" style="left:1271.60px;top:684.80px;">待缴纳</span>
<span class="t" style="left:1357.60px;top:684.80px;">未锁定</span>
<span class="t n2" style="left:1443.70px;top:684.80px;">2025-11-28 09:33:51</span>
<div style="left:272.00px;top:677.20px;width:13.80px;height:13.80px;border:1px solid #d9d9d9;border-radius:3.6px;background:#fff"></div>
<span class="t n" style="left:308.20px;top:721.92px;">F251128093350947</span>
<span class="t" style="left:488.20px;top:721.92px;">B-1-5</span>
<span class="t" style="left:574.60px;top:721.92px;">测试</span>
<span class="t" style="left:660.80px;top:721.92px;">2025-09</span>
<span class="t" style="left:747.20px;top:721.92px;">排污费 &gt; 用量阶梯计算</span>
<span class="t" style="left:927.20px;top:721.92px;">0</span>
<span class="t" style="left:1013.30px;top:721.92px;">0</span>
<span class="t" style="left:1099.40px;top:721.92px;">0</span>
<span class="t" style="left:1185.60px;top:721.92px;">0</span>
<span class="t" style="left:1271.60px;top:721.92px;">待缴纳</span>
<span class="t" style="left:1357.60px;top:721.92px;">未锁定</span>
<span class="t n2" style="left:1443.70px;top:721.92px;">2025-11-28 09:33:51</span>
<div style="left:272.00px;top:714.32px;width:13.80px;height:13.80px;border:1px solid #d9d9d9;border-radius:3.6px;background:#fff"></div>
<span class="t n" style="left:308.20px;top:759.04px;">F251128093350983</span>
<span class="t" style="left:488.20px;top:759.04px;">B-1-5</span>
<span class="t" style="left:574.60px;top:759.04px;">测试</span>
<span class="t" style="left:660.80px;top:759.04px;">2025-09</span>
<span class="t" style="left:747.20px;top:759.04px;">转供电服务费 &gt; 固定金额</span>
<span class="t" style="left:927.20px;top:759.04px;">1</span>
<span class="t" style="left:1013.30px;top:759.04px;">0</span>
<span class="t" style="left:1099.40px;top:759.04px;">0</span>
<span class="t" style="left:1185.60px;top:759.04px;">1</span>
<span class="t" style="left:1271.60px;top:759.04px;">待缴纳</span>
<span class="t" style="left:1357.60px;top:759.04px;">未锁定</span>
<span class="t n2" style="left:1443.70px;top:759.04px;">2025-11-28 09:33:51</span>
<div style="left:272.00px;top:751.44px;width:13.80px;height:13.80px;border:1px solid #d9d9d9;border-radius:3.6px;background:#fff"></div>
<div style="left:257.30px;top:776.60px;width:1700.00px;height:14.50px;background:#fafafa;border-left:1px solid #f0f0f0"></div>
<svg class="i" style="left:262.4px;top:780.50px" width="8" height="9.4" viewBox="0 0 8 9.4"><path d="M0.4 4.7 L7.4 0.2 V9.2 Z" fill="#8a8a8a"/></svg>
<div style="left:275.80px;top:780.60px;width:1700.00px;height:9.20px;background:#8b8b8b;border-radius:4.6px 0 0 4.6px"></div>
<div style="left:265.00px;top:799.00px;width:1700.00px;height:1.00px;background:#ececec"></div>
<div class="wm" style="left:280.80px;top:437.80px;width:200.00px;height:18.00px;">蒋燕 2025-11-28 10:48</div>
<div class="wm" style="left:639.80px;top:437.80px;width:200.00px;height:18.00px;">蒋燕 2025-11-28 10:48</div>
<div class="wm" style="left:998.80px;top:437.80px;width:200.00px;height:18.00px;">蒋燕 2025-11-28 10:48</div>
<div class="wm" style="left:1357.80px;top:437.80px;width:200.00px;height:18.00px;">蒋燕 2025-11-28 10:48</div>
<div class="wm" style="left:1716.80px;top:437.80px;width:200.00px;height:18.00px;">蒋燕 2025-11-28 10:48</div>
<div class="wm" style="left:2075.80px;top:437.80px;width:200.00px;height:18.00px;">蒋燕 2025-11-28 10:48</div>
<div class="wm" style="left:280.80px;top:618.80px;width:200.00px;height:18.00px;">蒋燕 2025-11-28 10:48</div>
<div class="wm" style="left:639.80px;top:618.80px;width:200.00px;height:18.00px;">蒋燕 2025-11-28 10:48</div>
<div class="wm" style="left:998.80px;top:618.80px;width:200.00px;height:18.00px;">蒋燕 2025-11-28 10:48</div>
<div class="wm" style="left:1357.80px;top:618.80px;width:200.00px;height:18.00px;">蒋燕 2025-11-28 10:48</div>
<div class="wm" style="left:1716.80px;top:618.80px;width:200.00px;height:18.00px;">蒋燕 2025-11-28 10:48</div>
<div class="wm" style="left:2075.80px;top:618.80px;width:200.00px;height:18.00px;">蒋燕 2025-11-28 10:48</div>
<div class="wm" style="left:280.80px;top:799.80px;width:200.00px;height:18.00px;">蒋燕 2025-11-28 10:48</div>
<div class="wm" style="left:639.80px;top:799.80px;width:200.00px;height:18.00px;">蒋燕 2025-11-28 10:48</div>
<div class="wm" style="left:998.80px;top:799.80px;width:200.00px;height:18.00px;">蒋燕 2025-11-28 10:48</div>
<div class="wm" style="left:1357.80px;top:799.80px;width:200.00px;height:18.00px;">蒋燕 2025-11-28 10:48</div>
<div class="wm" style="left:1716.80px;top:799.80px;width:200.00px;height:18.00px;">蒋燕 2025-11-28 10:48</div>
<div class="wm" style="left:2075.80px;top:799.80px;width:200.00px;height:18.00px;">蒋燕 2025-11-28 10:48</div>
<div class="wm" style="left:280.80px;top:980.80px;width:200.00px;height:18.00px;">蒋燕 2025-11-28 10:48</div>
<div class="wm" style="left:639.80px;top:980.80px;width:200.00px;height:18.00px;">蒋燕 2025-11-28 10:48</div>
<div class="wm" style="left:998.80px;top:980.80px;width:200.00px;height:18.00px;">蒋燕 2025-11-28 10:48</div>
<div class="wm" style="left:1357.80px;top:980.80px;width:200.00px;height:18.00px;">蒋燕 2025-11-28 10:48</div>
<div class="wm" style="left:1716.80px;top:980.80px;width:200.00px;height:18.00px;">蒋燕 2025-11-28 10:48</div>
<div class="wm" style="left:2075.80px;top:980.80px;width:200.00px;height:18.00px;">蒋燕 2025-11-28 10:48</div>
<div style="left:437.00px;top:543.50px;width:137.30px;height:94.30px;background:#fff;border-radius:7px;box-shadow:0 5px 14px 0 rgba(0,0,0,.08),0 3px 5px -3px rgba(0,0,0,.12),0 8px 25px 7px rgba(0,0,0,.05)"></div>
<span class="t" style="left:451.60px;top:562.70px;">批量免除违约金</span>
<span class="t" style="left:451.60px;top:591.55px;">批量重置违约金</span>
<span class="t" style="left:451.60px;top:620.40px;">一键生成违约金</span>
<div style="left:96.00px;top:285.00px;width:141.10px;height:900.00px;background:#001529"></div>
<svg class="i" style="left:110.00px;top:290.00px" width="28" height="28" viewBox="-14 -14 28 28"><g transform="rotate(28.6)"><circle cx="0" cy="-12.2" r="1.5" fill="#2f9fa6"/><path d="M-5.38 -10.86 A5.5 5.5 0 0 0 5.38 -10.86" stroke="#2f9fa6" stroke-width="1.9" fill="none" stroke-linecap="round"/><path d="M-2.53 -9.88 A3.3 3.3 0 0 0 2.53 -9.88" stroke="#d9982a" stroke-width="0.95" fill="none" stroke-linecap="round"/></g><g transform="rotate(100.6)"><circle cx="0" cy="-12.2" r="1.5" fill="#2f9fa6"/><path d="M-5.38 -10.86 A5.5 5.5 0 0 0 5.38 -10.86" stroke="#2f9fa6" stroke-width="1.9" fill="none" stroke-linecap="round"/><path d="M-2.53 -9.88 A3.3 3.3 0 0 0 2.53 -9.88" stroke="#d9982a" stroke-width="0.95" fill="none" stroke-linecap="round"/></g><g transform="rotate(172.6)"><circle cx="0" cy="-12.2" r="1.5" fill="#2f9fa6"/><path d="M-5.38 -10.86 A5.5 5.5 0 0 0 5.38 -10.86" stroke="#2f9fa6" stroke-width="1.9" fill="none" stroke-linecap="round"/><path d="M-2.53 -9.88 A3.3 3.3 0 0 0 2.53 -9.88" stroke="#d9982a" stroke-width="0.95" fill="none" stroke-linecap="round"/></g><g transform="rotate(244.6)"><circle cx="0" cy="-12.2" r="1.5" fill="#2f9fa6"/><path d="M-5.38 -10.86 A5.5 5.5 0 0 0 5.38 -10.86" stroke="#2f9fa6" stroke-width="1.9" fill="none" stroke-linecap="round"/><path d="M-2.53 -9.88 A3.3 3.3 0 0 0 2.53 -9.88" stroke="#d9982a" stroke-width="0.95" fill="none" stroke-linecap="round"/></g><g transform="rotate(316.6)"><circle cx="0" cy="-12.2" r="1.5" fill="#2f9fa6"/><path d="M-5.38 -10.86 A5.5 5.5 0 0 0 5.38 -10.86" stroke="#2f9fa6" stroke-width="1.9" fill="none" stroke-linecap="round"/><path d="M-2.53 -9.88 A3.3 3.3 0 0 0 2.53 -9.88" stroke="#d9982a" stroke-width="0.95" fill="none" stroke-linecap="round"/></g><circle r="3.5" fill="none" stroke="#2f9fa6" stroke-width="1.9"/></svg>
<span class="t" style="left:167.00px;top:304.00px;color:#fff;font-weight:700;font-size:14.4px">幸福家园</span>
<div style="left:101.00px;top:364.30px;width:133.00px;height:36.00px;background:#1677ff;border-radius:7.2px"></div>
<svg class="i" style="left:121.40px;top:336.20px;color:rgba(255,255,255,.65)" width="13.5" height="13.5" viewBox="0 0 14 14" fill="none" stroke="currentColor" stroke-width="1.1" stroke-linecap="round" stroke-linejoin="round"><path d="M1.2 6.6 L7 1.6 L12.8 6.6"/><path d="M2.8 5.6 V12.2 H11.2 V5.6"/><path d="M5.6 12.2 V9 H8.4 V12.2"/></svg>
<span class="t" style="left:143.60px;top:344.00px;color:rgba(255,255,255,.65);font-weight:500;">房屋账单</span>
<svg class="i" style="left:121.40px;top:375.20px;color:#fff" width="13.5" height="13.5" viewBox="0 0 14 14" fill="none" stroke="currentColor" stroke-width="1.1" stroke-linecap="round" stroke-linejoin="round"><rect x="1.5" y="1.5" width="11" height="11" rx="0.8"/><path d="M4.2 4.6h0.6M6.6 4.6h3.4M4.2 7h0.6M6.6 7h3.4M4.2 9.4h0.6M6.6 9.4h3.4" stroke-width="1"/></svg>
<span class="t" style="left:143.60px;top:383.00px;color:#fff;font-weight:500;">项目账单</span>
<svg class="i" style="left:121.40px;top:415.20px;color:rgba(255,255,255,.65)" width="13.5" height="13.5" viewBox="0 0 14 14" fill="none" stroke="currentColor" stroke-width="1.1" stroke-linecap="round" stroke-linejoin="round"><path d="M12.3 5.2 A5.6 5.6 0 1 0 12.3 8.8"/><path d="M7 3.8 V7.2 L9.2 8.6"/><path d="M10.4 7 H13"/></svg>
<span class="t" style="left:143.60px;top:423.00px;color:rgba(255,255,255,.65);font-weight:500;">账单记录</span>
<svg class="i" style="left:207.30px;top:415.60px;color:rgba(255,255,255,.65)" width="11" height="11" viewBox="0 0 14 14" fill="none" stroke="currentColor" stroke-width="1.7" stroke-linecap="round" stroke-linejoin="round"><path d="M3 5 L7 9 L11 5"/></svg>
<svg class="i" style="left:121.40px;top:458.20px;color:rgba(255,255,255,.65)" width="13.5" height="13.5" viewBox="0 0 14 14" fill="none" stroke="currentColor" stroke-width="1.1" stroke-linecap="round" stroke-linejoin="round"><path d="M7 1.4 L12 3 V7 C12 10 9.6 11.9 7 12.8 C4.4 11.9 2 10 2 7 V3 Z"/><path d="M4.8 6.8 L6.5 8.5 L9.4 5.4"/></svg>
<span class="t" style="left:143.60px;top:466.00px;color:rgba(255,255,255,.65);font-weight:500;">费用托收</span>
<svg class="i" style="left:207.30px;top:458.60px;color:rgba(255,255,255,.65)" width="11" height="11" viewBox="0 0 14 14" fill="none" stroke="currentColor" stroke-width="1.7" stroke-linecap="round" stroke-linejoin="round"><path d="M3 5 L7 9 L11 5"/></svg>
<svg class="i" style="left:121.40px;top:501.20px;color:rgba(255,255,255,.65)" width="13.5" height="13.5" viewBox="0 0 14 14" fill="none" stroke="currentColor" stroke-width="1.1" stroke-linecap="round" stroke-linejoin="round"><rect x="2.2" y="1.4" width="9.6" height="11.2" rx="0.6"/><path d="M5 4.2 L7 6.8 L9 4.2 M7 6.8 V10.6 M5.3 7.6 H8.7 M5.3 9.2 H8.7" stroke-width="0.9"/></svg>
<span class="t" style="left:143.60px;top:509.00px;color:rgba(255,255,255,.65);font-weight:500;">押金管理</span>
<svg class="i" style="left:121.40px;top:541.20px;color:rgba(255,255,255,.65)" width="13.5" height="13.5" viewBox="0 0 14 14" fill="none" stroke="currentColor" stroke-width="1.1" stroke-linecap="round" stroke-linejoin="round"><rect x="1.6" y="2.6" width="10.8" height="10" rx="0.6"/><path d="M4.4 1.2 V3.6 M9.6 1.2 V3.6"/><path d="M5.4 5.6 L7 7.6 L8.6 5.6 M7 7.6 V10.8 M5.6 8.4 H8.4 M5.6 9.6 H8.4" stroke-width="0.9"/></svg>
<span class="t" style="left:143.60px;top:549.00px;color:rgba(255,255,255,.65);font-weight:500;">房屋收费绑定</span>
<svg class="i" style="left:121.40px;top:580.20px;color:rgba(255,255,255,.65)" width="13.5" height="13.5" viewBox="0 0 14 14" fill="none" stroke="currentColor" stroke-width="1.1" stroke-linecap="round" stroke-linejoin="round"><circle cx="7" cy="7" r="4"/><circle cx="7" cy="7" r="1.4" fill="currentColor" stroke="none"/><path d="M7 0.8 V3 M7 11 V13.2 M0.8 7 H3 M11 7 H13.2"/></svg>
<span class="t" style="left:143.60px;top:588.00px;color:rgba(255,255,255,.65);font-weight:500;">收费标准</span></div></div>
<div id="s2b"></div>
</body></html>
